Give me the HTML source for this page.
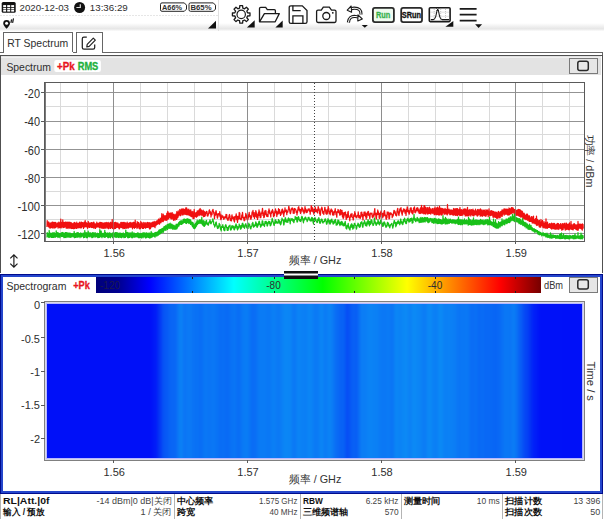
<!DOCTYPE html>
<html><head><meta charset="utf-8">
<style>
html,body{margin:0;padding:0;background:#fff;width:604px;height:519px;overflow:hidden}
svg{position:absolute;left:0;top:0;display:block}
text{font-family:"Liberation Sans",sans-serif;fill:#2e2e2e}
.b{font-weight:bold}
</style></head><body>
<svg width="604" height="519" viewBox="0 0 604 519" shape-rendering="crispEdges">
<defs>
<linearGradient id="tbg" x1="0" y1="0" x2="0" y2="1">
<stop offset="0" stop-color="#ffffff"/><stop offset="0.72" stop-color="#e6e6e6"/><stop offset="1" stop-color="#fbfbfb"/>
</linearGradient>
<linearGradient id="cbar" x1="0" y1="0" x2="1" y2="0">
<stop offset="0" stop-color="#00007a"/>
<stop offset="0.05" stop-color="#000090"/>
<stop offset="0.12" stop-color="#0000ff"/>
<stop offset="0.31" stop-color="#00ffff"/>
<stop offset="0.51" stop-color="#00ff00"/>
<stop offset="0.70" stop-color="#ffff00"/>
<stop offset="0.91" stop-color="#ff0000"/>
<stop offset="1" stop-color="#780000"/>
</linearGradient>
</defs>

<!-- ===== top status / toolbar ===== -->
<rect x="0" y="23" width="604" height="8" fill="url(#tbg)" shape-rendering="geometricPrecision"/>
<line x1="0" y1="15.5" x2="218" y2="15.5" stroke="#e6e6e6" stroke-dasharray="2 1"/>
<line x1="218.5" y1="0" x2="218.5" y2="31" stroke="#e0e0e0"/>

<!-- calendar -->
<g shape-rendering="geometricPrecision">
<rect x="1.7" y="2" width="14" height="10.7" rx="1.5" fill="#111"/>
<g fill="#fff">
<rect x="3.2" y="5.1" width="2.9" height="2"/><rect x="7.2" y="5.1" width="3" height="2"/><rect x="11.2" y="5.1" width="2.9" height="2"/>
<rect x="3.2" y="7.9" width="2.9" height="1.4"/><rect x="7.2" y="7.9" width="3" height="1.4"/><rect x="11.2" y="7.9" width="2.9" height="1.4"/>
<rect x="3.2" y="9.8" width="2.9" height="1.8"/><rect x="7.2" y="9.8" width="3" height="1.8"/><rect x="11.2" y="9.8" width="2.9" height="1.8"/>
</g>
</g>
<text x="19.5" y="11" font-size="9.5" textLength="49.5" lengthAdjust="spacingAndGlyphs">2020-12-03</text>
<!-- clock -->
<g shape-rendering="geometricPrecision">
<circle cx="79.6" cy="7.5" r="5.5" fill="#111"/>
<path d="M80.3 4.3V7.5H76.4" stroke="#ddd" stroke-width="1.2" fill="none"/>
</g>
<text x="89.8" y="11" font-size="9.5" textLength="38" lengthAdjust="spacingAndGlyphs">13:36:29</text>
<!-- batteries -->
<g shape-rendering="geometricPrecision" fill="none" stroke="#222" stroke-width="1">
<path d="M162 2.9H184.3L186.5 5.2V9.1L184.3 11.3H162Q160.5 11.3 160.5 9.8V4.4Q160.5 2.9 162 2.9Z"/>
<path d="M190.5 2.9H213.3L215.5 5.2V9.1L213.3 11.3H190.5Q189 11.3 189 9.8V4.4Q189 2.9 190.5 2.9Z"/>
</g>
<text x="162" y="10" font-size="7.5" class="b" textLength="20" lengthAdjust="spacingAndGlyphs">A66%</text>
<text x="190.5" y="10" font-size="7.5" class="b" textLength="21" lengthAdjust="spacingAndGlyphs">B65%</text>
<!-- location pin -->
<g shape-rendering="geometricPrecision">
<path d="M6.6 28.8C5 26.6 3.2 25.3 3.2 23.4A3.4 3.4 0 0 1 10 23.4C10 25.3 8.2 26.6 6.6 28.8Z" fill="#111"/>
<circle cx="6.6" cy="23.3" r="1.5" fill="#fff"/>
<path d="M11 22.4L11.5 20M12.7 22.4L13.4 18.8" stroke="#222" stroke-width="1.3" stroke-linecap="round" fill="none"/>
</g>
<path d="M208 28.5H216V20.8Z" fill="#111" shape-rendering="geometricPrecision"/>

<!-- toolbar icons -->
<g shape-rendering="geometricPrecision" fill="none" stroke="#1a1a1a" stroke-width="1.3">
<!-- gear -->
<path id="gear" d="M239.00 8.28 L239.58 8.10 L239.81 5.61 L242.59 5.61 L242.82 8.10 L243.97 8.52 L244.51 8.81 L246.43 7.20 L248.40 9.17 L246.79 11.09 L247.32 12.20 L247.50 12.78 L249.99 13.01 L249.99 15.79 L247.50 16.02 L247.08 17.17 L246.79 17.71 L248.40 19.63 L246.43 21.60 L244.51 19.99 L243.40 20.52 L242.82 20.70 L242.59 23.19 L239.81 23.19 L239.58 20.70 L238.43 20.28 L237.89 19.99 L235.97 21.60 L234.00 19.63 L235.61 17.71 L235.08 16.60 L234.90 16.02 L232.41 15.79 L232.41 13.01 L234.90 12.78 L235.32 11.63 L235.61 11.09 L234.00 9.17 L235.97 7.20 L237.89 8.81Z" stroke-linejoin="round"/>
<circle cx="241.2" cy="14.4" r="4.2" stroke-width="1.2"/>
<!-- folder -->
<path d="M259.5 21.8V8.6Q259.5 7.4 260.7 7.4H265.7L267.3 9.6H274.3Q275.4 9.6 275.4 10.7V13.4"/>
<path d="M259.5 21.8L264.4 13.6H279.3L275.2 21.8Z" stroke-linejoin="round"/>
<!-- save -->
<path d="M290.9 5.8H302.3L307 10.6V21.7Q307 23.4 305.3 23.4H290.9Q289.2 23.4 289.2 21.7V7.5Q289.2 5.8 290.9 5.8Z"/>
<path d="M292.9 5.8V10.7H300.7M292.9 23.4V15.8H302.9V23.4"/>
<!-- camera -->
<path d="M318 10.1H321.3L323.3 7.1H329.3L331.5 10.1H334.6Q336 10.1 336 11.5V21.1Q336 22.5 334.6 22.5H318Q316.6 22.5 316.6 21.1V11.5Q316.6 10.1 318 10.1Z"/>
<circle cx="326.3" cy="16" r="3.5"/>
<!-- arrows -->
<g stroke-linecap="butt">
<path d="M361 14.5Q361.5 8 354 8.2L350.5 8.8" stroke="#1a1a1a" stroke-width="3.2"/>
<path d="M361 14.5Q361.5 8 354 8.2L350.5 8.8" stroke="#fff" stroke-width="1.1"/>
<path d="M351.2 6L347.2 10.2L351.6 12.3Z" fill="#fff" stroke-width="1.1" stroke-linejoin="round"/>
<path d="M348.4 22.5Q349 15.8 355.5 16.5L358.5 17" stroke="#1a1a1a" stroke-width="3.2"/>
<path d="M348.4 22.5Q349 15.8 355.5 16.5L358.5 17" stroke="#fff" stroke-width="1.1"/>
<path d="M358 14.8L362.3 19L357.8 21Z" fill="#fff" stroke-width="1.1" stroke-linejoin="round"/>
</g>
<!-- chart icon -->
<rect x="429.3" y="7.8" width="20.8" height="13.8" rx="1" stroke-width="1.6"/>
<path d="M434.2 9V21M440.7 9V21M445.5 9V21M430.5 12.2H449M430.5 16.3H449" stroke="#b8b8b8" stroke-width="0.8" stroke-dasharray="1 1"/>
<path d="M430.8 19.6H433.2Q435.3 19.4 436.2 14.5Q437 10 437.7 10Q438.4 10 439.2 14.5Q440.1 19.4 442.3 19.6H449" stroke-width="1.1"/>
<path d="M436.4 8.4L439 11M439 8.4L436.4 11" stroke-width="0.9"/>
<!-- menu -->
<path d="M459.7 8.8H476.6M459.7 14.7H476.6M459.7 20.7H476.6" stroke-width="1.7"/>
</g>
<g fill="#111" shape-rendering="geometricPrecision">
<circle cx="332.8" cy="12.8" r="0.9"/>
<path d="M246.9 27.5H254.7V20.3Z"/>
<path d="M275.4 27.5H282.7V20.6Z"/>
<path d="M361.7 24.9H367.9L364.8 27.8Z"/>
<path d="M445.4 26.8H453.3V20.9Z"/>
<path d="M475.1 24.3H482.1L478.6 28Z"/>
</g>
<!-- run buttons -->
<g shape-rendering="geometricPrecision">
<rect x="372.9" y="7.9" width="21" height="14.2" rx="2" fill="#effaef" stroke="#2a2a2a" stroke-width="1.8"/>
<rect x="401.2" y="7.9" width="20.8" height="14.2" rx="2" fill="#fff" stroke="#2a2a2a" stroke-width="1.8"/>
</g>
<text x="376" y="17.8" font-size="9.3" class="b" style="fill:#34b04a;stroke:#34b04a;stroke-width:0.3" textLength="14.3" lengthAdjust="spacingAndGlyphs">Run</text>
<text x="401.8" y="17.8" font-size="9.3" class="b" style="fill:#111;stroke:#111;stroke-width:0.35" textLength="19.3" lengthAdjust="spacingAndGlyphs">SRun</text>

<!-- ===== tabs ===== -->
<path d="M0 52.5H3.5V32.5H72.5V52" fill="none" stroke="#666"/>
<path d="M72.5 52.5H76.5V32.5H102.5V52.5H602.5V56" fill="none" stroke="#666"/>
<text x="7.2" y="47" font-size="11.5" textLength="61" lengthAdjust="spacingAndGlyphs">RT Spectrum</text>
<g shape-rendering="geometricPrecision" fill="none" stroke="#222" stroke-width="1.25">
<path d="M86.8 37.1H83.9Q82.3 37.1 82.3 38.7V47.5Q82.3 49.1 83.9 49.1H93.1Q94.7 49.1 94.7 47.5V44.6"/>
<path d="M87.2 44.4L93.3 38.2L95.3 40.2L89.2 46.4L86.8 46.8Z" stroke-width="1.2" stroke-linejoin="round"/>
</g>

<!-- ===== Spectrum panel ===== -->
<path d="M0.5 273V55.5H602.5V273" fill="none" stroke="#505050"/>
<rect x="1" y="56" width="600" height="19" fill="#e3e3e3"/><rect x="1" y="57" width="600" height="1" fill="#f0f0f0"/>
<text x="6.4" y="70.8" font-size="11.5" textLength="44.5" lengthAdjust="spacingAndGlyphs">Spectrum</text>
<rect x="54.3" y="60" width="46.6" height="12" rx="2" fill="#fff" shape-rendering="geometricPrecision"/>
<text x="57" y="69.6" font-size="10" class="b" style="fill:#e8141e;stroke:#e8141e;stroke-width:0.3" textLength="17.7" lengthAdjust="spacingAndGlyphs">+Pk</text>
<text x="77.7" y="69.6" font-size="10" class="b" style="fill:#22b03c;stroke:#22b03c;stroke-width:0.3" textLength="20.6" lengthAdjust="spacingAndGlyphs">RMS</text>
<rect x="569.5" y="58.5" width="27.5" height="15" fill="#e6e6e6" stroke="#7a7a7a"/>
<rect x="577.8" y="61.2" width="10.5" height="9.2" rx="2" fill="#e8e8e8" stroke="#2a2a2a" stroke-width="1.5" shape-rendering="geometricPrecision"/>

<!-- grid -->
<g stroke="#dadada">
<line x1="60.5" y1="83" x2="60.5" y2="241"/><line x1="87.5" y1="83" x2="87.5" y2="241"/><line x1="140.5" y1="83" x2="140.5" y2="241"/><line x1="167.5" y1="83" x2="167.5" y2="241"/><line x1="194.5" y1="83" x2="194.5" y2="241"/><line x1="221.5" y1="83" x2="221.5" y2="241"/><line x1="274.5" y1="83" x2="274.5" y2="241"/><line x1="301.5" y1="83" x2="301.5" y2="241"/><line x1="328.5" y1="83" x2="328.5" y2="241"/><line x1="355.5" y1="83" x2="355.5" y2="241"/><line x1="408.5" y1="83" x2="408.5" y2="241"/><line x1="435.5" y1="83" x2="435.5" y2="241"/><line x1="462.5" y1="83" x2="462.5" y2="241"/><line x1="489.5" y1="83" x2="489.5" y2="241"/><line x1="542.5" y1="83" x2="542.5" y2="241"/><line x1="569.5" y1="83" x2="569.5" y2="241"/><line x1="45" y1="106.5" x2="584" y2="106.5"/><line x1="45" y1="134.5" x2="584" y2="134.5"/><line x1="45" y1="163.5" x2="584" y2="163.5"/><line x1="45" y1="191.5" x2="584" y2="191.5"/><line x1="45" y1="219.5" x2="584" y2="219.5"/>
</g>
<g stroke="#939393">
<line x1="113.5" y1="83" x2="113.5" y2="241"/><line x1="247.5" y1="83" x2="247.5" y2="241"/><line x1="381.5" y1="83" x2="381.5" y2="241"/><line x1="515.5" y1="83" x2="515.5" y2="241"/><line x1="45" y1="92.5" x2="584" y2="92.5"/><line x1="45" y1="121.5" x2="584" y2="121.5"/><line x1="45" y1="149.5" x2="584" y2="149.5"/><line x1="45" y1="177.5" x2="584" y2="177.5"/><line x1="45" y1="205.5" x2="584" y2="205.5"/><line x1="45" y1="233.5" x2="584" y2="233.5"/>
</g>
<rect x="44.5" y="82.5" width="540" height="159" fill="none" stroke="#5a5a5a"/>
<line x1="45.5" y1="83" x2="45.5" y2="241" stroke="#7a7a7a"/>
<g stroke="#5a5a5a"><line x1="41" y1="92.5" x2="45" y2="92.5"/><line x1="41" y1="121.5" x2="45" y2="121.5"/><line x1="41" y1="149.5" x2="45" y2="149.5"/><line x1="41" y1="177.5" x2="45" y2="177.5"/><line x1="41" y1="205.5" x2="45" y2="205.5"/><line x1="41" y1="233.5" x2="45" y2="233.5"/><line x1="113.5" y1="241" x2="113.5" y2="244"/><line x1="247.5" y1="241" x2="247.5" y2="244"/><line x1="381.5" y1="241" x2="381.5" y2="244"/><line x1="515.5" y1="241" x2="515.5" y2="244"/></g>
<g shape-rendering="geometricPrecision" fill="none" stroke-width="1.25" stroke-linejoin="round">
<path d="M47.0 226.9 L47.2 220.6 L47.5 225.0 L47.8 224.1 L48.0 224.7 L48.2 222.3 L48.5 226.7 L48.8 222.0 L49.0 227.1 L49.2 224.1 L49.5 226.9 L49.8 224.0 L50.0 228.1 L50.2 222.9 L50.5 227.1 L50.8 223.3 L51.0 227.8 L51.2 223.5 L51.5 227.3 L51.8 222.4 L52.0 226.8 L52.2 223.0 L52.5 227.9 L52.8 222.0 L53.0 227.2 L53.2 223.9 L53.5 226.3 L53.8 222.5 L54.0 228.2 L54.2 222.6 L54.5 227.6 L54.8 222.3 L55.0 227.3 L55.2 224.1 L55.5 227.7 L55.8 222.4 L56.0 227.1 L56.2 224.2 L56.5 226.6 L56.8 224.1 L57.0 226.5 L57.2 223.4 L57.5 226.4 L57.8 223.0 L58.0 228.1 L58.2 223.6 L58.5 227.1 L58.8 222.1 L59.0 226.7 L59.2 223.7 L59.5 227.6 L59.8 224.3 L60.0 227.1 L60.2 222.1 L60.5 227.4 L60.8 219.1 L61.0 228.1 L61.2 222.4 L61.5 227.2 L61.8 222.5 L62.0 226.7 L62.2 223.5 L62.5 226.6 L62.8 219.9 L63.0 227.7 L63.2 223.7 L63.5 227.1 L63.8 222.3 L64.0 227.3 L64.2 224.1 L64.5 227.1 L64.8 222.4 L65.0 226.3 L65.2 223.1 L65.5 225.4 L65.8 222.0 L66.0 227.9 L66.2 223.4 L66.5 228.1 L66.8 222.5 L67.0 226.8 L67.2 222.0 L67.5 228.1 L67.8 222.6 L68.0 227.5 L68.2 223.1 L68.5 226.9 L68.8 222.1 L69.0 228.5 L69.2 222.1 L69.5 226.8 L69.8 223.9 L70.0 227.7 L70.2 222.4 L70.5 227.8 L70.8 224.1 L71.0 228.4 L71.2 222.6 L71.5 226.7 L71.8 223.6 L72.0 228.5 L72.2 223.4 L72.5 228.0 L72.8 224.0 L73.0 228.4 L73.2 224.0 L73.5 228.6 L73.8 223.5 L74.0 222.7 L74.2 222.8 L74.5 228.5 L74.8 222.3 L75.0 226.8 L75.2 223.7 L75.5 227.7 L75.8 223.4 L76.0 228.4 L76.2 223.3 L76.5 228.4 L76.8 222.2 L77.0 227.6 L77.2 224.3 L77.5 223.6 L77.8 223.9 L78.0 228.0 L78.2 223.6 L78.5 227.6 L78.8 224.1 L79.0 226.9 L79.2 222.6 L79.5 227.6 L79.8 222.2 L80.0 227.7 L80.2 223.2 L80.5 227.4 L80.8 223.3 L81.0 228.0 L81.2 222.2 L81.5 227.6 L81.8 222.4 L82.0 226.6 L82.2 224.2 L82.5 226.5 L82.8 222.6 L83.0 226.7 L83.2 222.8 L83.5 228.4 L83.8 223.9 L84.0 227.3 L84.2 222.1 L84.5 226.7 L84.8 223.2 L85.0 226.8 L85.2 220.5 L85.5 226.0 L85.8 222.9 L86.0 226.5 L86.2 222.6 L86.5 226.6 L86.8 224.3 L87.0 227.0 L87.2 223.4 L87.5 228.3 L87.8 224.0 L88.0 227.7 L88.2 221.4 L88.5 223.6 L88.8 222.9 L89.0 226.6 L89.2 224.2 L89.5 227.4 L89.8 223.1 L90.0 227.0 L90.2 223.2 L90.5 226.6 L90.8 224.3 L91.0 227.1 L91.2 222.6 L91.5 227.5 L91.8 222.6 L92.0 226.4 L92.2 223.1 L92.5 227.5 L92.8 224.2 L93.0 227.4 L93.2 222.5 L93.5 227.6 L93.8 222.1 L94.0 228.3 L94.2 222.9 L94.5 226.7 L94.8 224.3 L95.0 227.0 L95.2 224.2 L95.5 228.4 L95.8 223.8 L96.0 227.1 L96.2 224.1 L96.5 227.0 L96.8 222.2 L97.0 227.0 L97.2 223.7 L97.5 226.4 L97.8 223.3 L98.0 226.9 L98.2 224.4 L98.5 226.6 L98.8 223.1 L99.0 227.0 L99.2 223.2 L99.5 227.9 L99.8 222.4 L100.0 227.2 L100.2 224.1 L100.5 224.6 L100.8 222.4 L101.0 228.1 L101.2 224.1 L101.5 227.6 L101.8 222.6 L102.0 227.8 L102.2 222.9 L102.5 226.4 L102.8 223.6 L103.0 228.4 L103.2 223.0 L103.5 228.0 L103.8 224.4 L104.0 228.2 L104.2 223.2 L104.5 226.6 L104.8 222.8 L105.0 228.1 L105.2 222.8 L105.5 227.6 L105.8 223.4 L106.0 228.2 L106.2 222.4 L106.5 227.0 L106.8 223.8 L107.0 225.4 L107.2 222.9 L107.5 228.0 L107.8 223.3 L108.0 227.5 L108.2 222.4 L108.5 228.7 L108.8 224.4 L109.0 228.4 L109.2 223.4 L109.5 226.9 L109.8 224.0 L110.0 226.8 L110.2 222.3 L110.5 228.4 L110.8 222.4 L111.0 227.0 L111.2 223.4 L111.5 227.6 L111.8 223.8 L112.0 227.3 L112.2 219.5 L112.5 228.4 L112.8 222.4 L113.0 228.6 L113.2 223.6 L113.5 228.8 L113.8 223.7 L114.0 226.7 L114.2 222.6 L114.5 228.6 L114.8 223.9 L115.0 226.9 L115.2 222.3 L115.5 228.4 L115.8 222.4 L116.0 227.8 L116.2 224.4 L116.5 227.5 L116.8 223.0 L117.0 226.6 L117.2 224.2 L117.5 227.3 L117.8 222.8 L118.0 227.1 L118.2 223.8 L118.5 227.4 L118.8 224.1 L119.0 228.6 L119.2 224.0 L119.5 228.8 L119.8 224.2 L120.0 226.7 L120.2 224.3 L120.5 227.1 L120.8 222.5 L121.0 227.5 L121.2 223.3 L121.5 226.2 L121.8 222.3 L122.0 227.7 L122.2 222.5 L122.5 227.1 L122.8 223.6 L123.0 228.7 L123.2 222.4 L123.5 228.2 L123.8 223.4 L124.0 226.5 L124.2 222.4 L124.5 228.5 L124.8 224.0 L125.0 226.9 L125.2 223.0 L125.5 228.2 L125.8 222.8 L126.0 224.7 L126.2 224.0 L126.5 228.0 L126.8 224.3 L127.0 228.0 L127.2 222.2 L127.5 227.9 L127.8 224.0 L128.0 226.6 L128.2 223.5 L128.5 228.0 L128.8 223.5 L129.0 227.1 L129.2 222.9 L129.5 226.6 L129.8 223.0 L130.0 227.1 L130.2 222.4 L130.5 226.6 L130.8 223.6 L131.0 227.0 L131.2 222.9 L131.5 227.0 L131.8 223.9 L132.0 227.1 L132.2 222.8 L132.5 228.8 L132.8 224.1 L133.0 227.5 L133.2 222.4 L133.5 227.5 L133.8 222.3 L134.0 225.1 L134.2 222.5 L134.5 228.3 L134.8 222.4 L135.0 227.0 L135.2 220.2 L135.5 227.4 L135.8 223.8 L136.0 226.6 L136.2 223.8 L136.5 226.9 L136.8 224.1 L137.0 228.5 L137.2 221.7 L137.5 227.4 L137.8 224.2 L138.0 227.0 L138.2 222.7 L138.5 226.4 L138.8 222.5 L139.0 228.3 L139.2 223.8 L139.5 228.8 L139.8 224.0 L140.0 227.3 L140.2 224.6 L140.5 228.7 L140.8 221.5 L141.0 227.7 L141.2 222.4 L141.5 227.2 L141.8 223.5 L142.0 227.0 L142.2 222.9 L142.5 228.4 L142.8 223.9 L143.0 227.5 L143.2 224.5 L143.5 228.4 L143.8 222.3 L144.0 227.4 L144.2 222.6 L144.5 226.9 L144.8 223.5 L145.0 227.7 L145.2 223.7 L145.5 228.2 L145.8 222.7 L146.0 226.9 L146.2 224.0 L146.5 227.5 L146.8 224.2 L147.0 227.2 L147.2 222.6 L147.5 227.4 L147.8 222.4 L148.0 227.2 L148.2 223.2 L148.5 226.9 L148.8 222.8 L149.0 227.6 L149.2 224.4 L149.5 228.9 L149.8 222.6 L150.0 228.7 L150.2 224.0 L150.5 228.7 L150.8 223.1 L151.0 226.9 L151.2 224.0 L151.5 226.9 L151.8 222.7 L152.0 226.2 L152.2 222.5 L152.5 226.7 L152.8 222.1 L153.0 226.0 L153.2 222.9 L153.5 226.5 L153.8 222.1 L154.0 226.2 L154.2 221.3 L154.5 226.7 L154.8 222.4 L155.0 227.6 L155.2 222.7 L155.5 221.9 L155.8 221.9 L156.0 225.6 L156.2 221.5 L156.5 224.5 L156.8 220.8 L157.0 224.3 L157.2 221.1 L157.5 224.2 L157.8 220.5 L158.0 223.8 L158.2 219.6 L158.5 223.7 L158.8 219.0 L159.0 220.4 L159.2 219.9 L159.5 224.1 L159.8 220.2 L160.0 222.9 L160.2 218.0 L160.5 222.5 L160.8 218.7 L161.0 222.6 L161.2 218.7 L161.5 221.3 L161.8 213.7 L162.0 221.2 L162.2 217.1 L162.5 221.3 L162.8 216.7 L163.0 221.7 L163.2 214.1 L163.5 220.9 L163.8 215.4 L164.0 220.4 L164.2 215.7 L164.5 219.2 L164.8 216.3 L165.0 217.2 L165.2 216.0 L165.5 220.2 L165.8 215.8 L166.0 219.0 L166.2 215.4 L166.5 220.3 L166.8 213.5 L167.0 220.0 L167.2 212.9 L167.5 217.7 L167.8 211.3 L168.0 219.0 L168.2 212.6 L168.5 218.9 L168.8 213.3 L169.0 217.2 L169.2 213.1 L169.5 216.5 L169.8 213.7 L170.0 217.9 L170.2 213.7 L170.5 216.7 L170.8 212.8 L171.0 218.8 L171.2 213.1 L171.5 217.1 L171.8 213.2 L172.0 219.1 L172.2 212.6 L172.5 218.2 L172.8 214.2 L173.0 216.2 L173.2 214.9 L173.5 220.3 L173.8 214.1 L174.0 217.4 L174.2 214.4 L174.5 219.5 L174.8 215.9 L175.0 220.1 L175.2 215.2 L175.5 218.9 L175.8 214.1 L176.0 218.1 L176.2 213.9 L176.5 219.4 L176.8 211.7 L177.0 218.8 L177.2 213.2 L177.5 216.2 L177.8 212.3 L178.0 217.3 L178.2 210.9 L178.5 215.8 L178.8 212.7 L179.0 215.7 L179.2 212.2 L179.5 214.3 L179.8 209.5 L180.0 214.3 L180.2 210.3 L180.5 215.7 L180.8 210.6 L181.0 213.6 L181.2 209.2 L181.5 213.3 L181.8 209.1 L182.0 215.0 L182.2 210.3 L182.5 212.2 L182.8 208.8 L183.0 214.9 L183.2 209.8 L183.5 213.7 L183.8 209.0 L184.0 214.0 L184.2 209.6 L184.5 212.3 L184.8 209.4 L185.0 214.5 L185.2 209.2 L185.5 213.0 L185.8 207.8 L186.0 214.1 L186.2 207.8 L186.5 214.6 L186.8 208.2 L187.0 214.4 L187.2 209.7 L187.5 210.6 L187.8 209.8 L188.0 215.1 L188.2 210.2 L188.5 214.7 L188.8 209.1 L189.0 213.2 L189.2 210.0 L189.5 215.2 L189.8 210.9 L190.0 215.6 L190.2 211.1 L190.5 210.7 L190.8 209.8 L191.0 216.4 L191.2 211.3 L191.5 216.7 L191.8 212.1 L192.0 215.3 L192.2 212.7 L192.5 216.7 L192.8 211.4 L193.0 218.4 L193.2 214.3 L193.5 217.9 L193.8 214.0 L194.0 218.6 L194.2 209.5 L194.5 216.5 L194.8 212.6 L195.0 216.5 L195.2 212.9 L195.5 216.6 L195.8 212.9 L196.0 216.4 L196.2 212.7 L196.5 217.1 L196.8 212.7 L197.0 215.2 L197.2 210.9 L197.5 216.2 L197.8 211.2 L198.0 212.9 L198.2 211.8 L198.5 214.5 L198.8 210.2 L199.0 215.7 L199.2 209.9 L199.5 215.0 L199.8 209.1 L200.0 213.5 L200.2 208.5 L200.5 214.8 L200.8 209.8 L201.0 214.6 L201.2 209.9 L201.5 214.0 L201.8 210.6 L202.0 215.7 L202.2 211.2 L202.5 214.7 L202.8 211.4 L203.0 214.5 L203.2 210.2 L203.5 216.7 L203.8 211.3 L204.0 216.5 L204.2 211.4 L204.5 216.4 L204.8 212.2 L205.0 215.1 L205.2 215.8 L205.5 213.5 L205.8 212.5 L206.0 212.3 L206.2 212.2 L206.5 211.3 L206.8 213.6 L207.0 211.7 L207.2 215.7 L207.5 215.5 L207.8 216.2 L208.0 215.1 L208.2 215.1 L208.5 213.2 L208.8 213.8 L209.0 210.7 L209.2 210.8 L209.5 209.8 L209.8 212.8 L210.0 212.1 L210.2 211.6 L210.5 214.1 L210.8 212.2 L211.0 217.0 L211.2 213.3 L211.5 214.8 L211.8 213.9 L212.0 214.8 L212.2 212.0 L212.5 210.2 L212.8 210.5 L213.0 209.3 L213.2 210.7 L213.5 211.4 L213.8 213.4 L214.0 213.9 L214.2 214.1 L214.5 218.6 L214.8 214.2 L215.0 214.4 L215.2 212.4 L215.5 215.1 L215.8 212.7 L216.0 210.7 L216.2 211.3 L216.5 214.5 L216.8 213.6 L217.0 214.9 L217.2 217.2 L217.5 218.2 L217.8 216.6 L218.0 216.5 L218.2 213.7 L218.5 214.4 L218.8 213.8 L219.0 213.7 L219.2 214.2 L219.5 215.2 L219.8 211.6 L220.0 216.8 L220.2 213.8 L220.5 217.1 L220.8 219.6 L221.0 217.0 L221.2 216.4 L221.5 218.9 L221.8 215.0 L222.0 217.6 L222.2 217.4 L222.5 216.1 L222.8 216.0 L223.0 216.6 L223.2 216.7 L223.5 217.8 L223.8 219.4 L224.0 217.2 L224.2 217.4 L224.5 217.3 L224.8 217.0 L225.0 218.1 L225.2 217.1 L225.5 216.4 L225.8 216.6 L226.0 214.4 L226.2 217.8 L226.5 217.0 L226.8 214.7 L227.0 218.8 L227.2 217.9 L227.5 219.6 L227.8 220.3 L228.0 219.9 L228.2 220.3 L228.5 217.6 L228.8 218.3 L229.0 215.8 L229.2 215.7 L229.5 214.5 L229.8 215.9 L230.0 216.0 L230.2 220.3 L230.5 220.2 L230.8 218.6 L231.0 220.8 L231.2 219.3 L231.5 220.8 L231.8 215.8 L232.0 214.8 L232.2 218.6 L232.5 216.5 L232.8 217.7 L233.0 217.0 L233.2 218.2 L233.5 218.9 L233.8 219.6 L234.0 220.9 L234.2 216.9 L234.5 222.0 L234.8 218.5 L235.0 219.8 L235.2 216.4 L235.5 216.4 L235.8 215.6 L236.0 216.3 L236.2 213.9 L236.5 218.5 L236.8 219.8 L237.0 216.0 L237.2 219.7 L237.5 222.4 L237.8 219.3 L238.0 219.7 L238.2 216.4 L238.5 218.3 L238.8 218.9 L239.0 217.6 L239.2 212.5 L239.5 214.4 L239.8 213.0 L240.0 218.2 L240.2 219.1 L240.5 219.3 L240.8 219.2 L241.0 218.3 L241.2 219.8 L241.5 218.7 L241.8 215.0 L242.0 217.5 L242.2 217.3 L242.5 212.4 L242.8 215.5 L243.0 216.8 L243.2 218.1 L243.5 218.1 L243.8 217.7 L244.0 220.3 L244.2 220.8 L244.5 217.5 L244.8 220.1 L245.0 218.5 L245.2 216.6 L245.5 216.9 L245.8 213.4 L246.0 216.5 L246.2 216.2 L246.5 218.0 L246.8 215.0 L247.0 217.1 L247.2 219.8 L247.5 216.7 L247.8 219.7 L248.0 217.7 L248.2 218.3 L248.5 216.6 L248.8 214.1 L249.0 214.3 L249.2 212.3 L249.5 216.7 L249.8 215.8 L250.0 215.9 L250.2 215.5 L250.5 219.0 L250.8 216.2 L251.0 219.1 L251.2 217.3 L251.5 218.0 L251.8 215.1 L252.0 212.9 L252.2 212.0 L252.5 212.4 L252.8 213.3 L253.0 210.4 L253.2 214.7 L253.5 216.7 L253.8 215.1 L254.0 216.8 L254.2 212.6 L254.5 218.4 L254.8 216.0 L255.0 216.3 L255.2 216.3 L255.5 214.8 L255.8 210.7 L256.0 211.6 L256.2 211.7 L256.5 216.6 L256.8 217.7 L257.0 214.0 L257.2 216.4 L257.5 219.4 L257.8 216.6 L258.0 217.7 L258.2 214.1 L258.5 212.1 L258.8 215.5 L259.0 209.9 L259.2 211.9 L259.5 215.4 L259.8 211.9 L260.0 215.9 L260.2 217.7 L260.5 217.7 L260.8 217.7 L261.0 216.5 L261.2 213.2 L261.5 213.2 L261.8 213.5 L262.0 211.5 L262.2 211.1 L262.5 208.3 L262.8 211.4 L263.0 215.4 L263.2 212.5 L263.5 213.1 L263.8 217.6 L264.0 216.4 L264.2 217.4 L264.5 215.6 L264.8 211.0 L265.0 213.6 L265.2 214.4 L265.5 211.3 L265.8 210.4 L266.0 211.5 L266.2 213.1 L266.5 215.9 L266.8 214.9 L267.0 216.3 L267.2 216.1 L267.5 214.5 L267.8 214.2 L268.0 216.6 L268.2 211.3 L268.5 212.8 L268.8 210.7 L269.0 208.8 L269.2 211.2 L269.5 210.3 L269.8 213.7 L270.0 214.0 L270.2 213.7 L270.5 214.0 L270.8 217.0 L271.0 213.3 L271.2 212.0 L271.5 213.3 L271.8 211.0 L272.0 212.7 L272.2 211.3 L272.5 209.5 L272.8 212.0 L273.0 210.9 L273.2 213.1 L273.5 216.6 L273.8 213.1 L274.0 215.5 L274.2 213.7 L274.5 215.7 L274.8 211.5 L275.0 211.7 L275.2 211.3 L275.5 208.9 L275.8 212.8 L276.0 211.0 L276.2 212.1 L276.5 211.2 L276.8 216.5 L277.0 215.0 L277.2 213.2 L277.5 213.1 L277.8 211.7 L278.0 214.2 L278.2 213.0 L278.5 208.7 L278.8 210.7 L279.0 211.5 L279.2 213.1 L279.5 209.6 L279.8 212.6 L280.0 212.3 L280.2 213.7 L280.5 215.4 L280.8 212.3 L281.0 214.5 L281.2 214.0 L281.5 211.0 L281.8 212.4 L282.0 209.4 L282.2 211.1 L282.5 209.1 L282.8 210.8 L283.0 213.4 L283.2 214.2 L283.5 211.1 L283.8 216.4 L284.0 212.3 L284.2 213.4 L284.5 212.0 L284.8 210.7 L285.0 207.8 L285.2 211.8 L285.5 211.1 L285.8 211.2 L286.0 210.7 L286.2 209.9 L286.5 210.7 L286.8 214.7 L287.0 212.0 L287.2 212.7 L287.5 211.2 L287.8 212.1 L288.0 211.0 L288.2 209.8 L288.5 208.7 L288.8 206.3 L289.0 206.9 L289.2 209.1 L289.5 209.0 L289.8 211.2 L290.0 212.3 L290.2 213.3 L290.5 213.7 L290.8 212.1 L291.0 210.9 L291.2 208.9 L291.5 209.5 L291.8 208.2 L292.0 209.7 L292.2 208.6 L292.5 208.0 L292.8 208.8 L293.0 208.9 L293.2 213.3 L293.5 209.9 L293.8 212.3 L294.0 209.8 L294.2 213.3 L294.5 208.5 L294.8 208.7 L295.0 209.2 L295.2 209.4 L295.5 209.2 L295.8 210.0 L296.0 210.9 L296.2 212.4 L296.5 211.1 L296.8 212.2 L297.0 214.9 L297.2 211.4 L297.5 212.8 L297.8 209.6 L298.0 209.2 L298.2 207.5 L298.5 208.0 L298.8 206.7 L299.0 210.1 L299.2 208.9 L299.5 208.9 L299.8 211.1 L300.0 209.4 L300.2 211.4 L300.5 213.5 L300.8 209.5 L301.0 212.2 L301.2 209.8 L301.5 210.8 L301.8 208.1 L302.0 207.6 L302.2 209.2 L302.5 208.4 L302.8 209.1 L303.0 211.6 L303.2 209.5 L303.5 211.8 L303.8 212.5 L304.0 213.7 L304.2 210.3 L304.5 212.3 L304.8 209.2 L305.0 206.6 L305.2 209.9 L305.5 208.4 L305.8 211.1 L306.0 211.5 L306.2 212.7 L306.5 209.8 L306.8 212.4 L307.0 210.9 L307.2 212.4 L307.5 210.2 L307.8 209.9 L308.0 210.9 L308.2 208.9 L308.5 209.6 L308.8 209.2 L309.0 209.2 L309.2 208.8 L309.5 210.9 L309.8 211.9 L310.0 210.5 L310.2 214.2 L310.5 210.1 L310.8 211.4 L311.0 211.1 L311.2 205.7 L311.5 208.1 L311.8 207.5 L312.0 207.2 L312.2 211.2 L312.5 209.2 L312.8 208.1 L313.0 212.0 L313.2 212.1 L313.5 209.7 L313.8 214.2 L314.0 213.7 L314.2 209.9 L314.5 212.4 L314.8 211.6 L315.0 208.0 L315.2 207.0 L315.5 211.1 L315.8 211.5 L316.0 209.2 L316.2 210.1 L316.5 211.4 L316.8 211.3 L317.0 212.2 L317.2 209.8 L317.5 212.9 L317.8 209.2 L318.0 208.6 L318.2 206.6 L318.5 207.7 L318.8 210.3 L319.0 208.9 L319.2 209.0 L319.5 213.4 L319.8 210.8 L320.0 214.4 L320.2 215.4 L320.5 214.6 L320.8 210.2 L321.0 209.0 L321.2 208.8 L321.5 209.7 L321.8 207.2 L322.0 207.9 L322.2 208.2 L322.5 211.1 L322.8 213.1 L323.0 213.3 L323.2 212.4 L323.5 211.4 L323.8 214.5 L324.0 212.8 L324.2 211.5 L324.5 210.4 L324.8 207.4 L325.0 207.5 L325.2 210.4 L325.5 209.7 L325.8 212.3 L326.0 213.6 L326.2 209.8 L326.5 214.2 L326.8 213.4 L327.0 214.1 L327.2 214.0 L327.5 212.2 L327.8 208.8 L328.0 211.2 L328.2 206.5 L328.5 207.9 L328.8 208.8 L329.0 211.7 L329.2 213.5 L329.5 213.7 L329.8 213.1 L330.0 211.4 L330.2 214.8 L330.5 210.4 L330.8 211.9 L331.0 209.3 L331.2 209.0 L331.5 211.0 L331.8 210.6 L332.0 211.7 L332.2 210.2 L332.5 214.4 L332.8 215.1 L333.0 215.0 L333.2 215.2 L333.5 211.9 L333.8 213.1 L334.0 214.8 L334.2 211.6 L334.5 212.7 L334.8 210.7 L335.0 210.7 L335.2 208.7 L335.5 211.2 L335.8 211.5 L336.0 214.4 L336.2 212.8 L336.5 215.1 L336.8 217.1 L337.0 213.1 L337.2 211.6 L337.5 211.8 L337.8 212.1 L338.0 209.5 L338.2 210.9 L338.5 212.6 L338.8 210.1 L339.0 212.2 L339.2 211.5 L339.5 213.0 L339.8 215.1 L340.0 214.7 L340.2 214.2 L340.5 209.6 L340.8 214.7 L341.0 213.9 L341.2 212.4 L341.5 211.3 L341.8 210.4 L342.0 210.3 L342.2 214.4 L342.5 216.8 L342.8 214.2 L343.0 212.6 L343.2 218.6 L343.5 214.6 L343.8 217.2 L344.0 213.1 L344.2 215.7 L344.5 212.5 L344.8 214.3 L345.0 212.3 L345.2 213.1 L345.5 212.0 L345.8 216.2 L346.0 217.5 L346.2 219.5 L346.5 218.2 L346.8 216.5 L347.0 214.7 L347.2 214.4 L347.5 217.7 L347.8 212.4 L348.0 212.4 L348.2 211.4 L348.5 216.6 L348.8 215.3 L349.0 217.3 L349.2 217.0 L349.5 218.0 L349.8 220.8 L350.0 217.1 L350.2 217.7 L350.5 216.4 L350.8 214.2 L351.0 215.3 L351.2 216.7 L351.5 216.6 L351.8 215.5 L352.0 213.5 L352.2 217.0 L352.5 217.6 L352.8 217.9 L353.0 217.7 L353.2 220.0 L353.5 218.6 L353.8 214.8 L354.0 215.4 L354.2 214.8 L354.5 214.8 L354.8 211.7 L355.0 216.4 L355.2 213.2 L355.5 214.7 L355.8 216.8 L356.0 217.4 L356.2 216.8 L356.5 216.3 L356.8 217.9 L357.0 216.2 L357.2 215.5 L357.5 215.3 L357.8 215.5 L358.0 215.9 L358.2 211.8 L358.5 214.1 L358.8 217.7 L359.0 217.5 L359.2 217.7 L359.5 215.6 L359.8 216.6 L360.0 218.3 L360.2 218.4 L360.5 217.5 L360.8 216.9 L361.0 212.3 L361.2 212.4 L361.5 214.2 L361.8 212.2 L362.0 216.0 L362.2 215.3 L362.5 214.3 L362.8 218.6 L363.0 220.0 L363.2 215.8 L363.5 216.0 L363.8 215.8 L364.0 212.2 L364.2 215.3 L364.5 213.3 L364.8 213.7 L365.0 211.8 L365.2 214.5 L365.5 216.6 L365.8 213.4 L366.0 214.8 L366.2 219.2 L366.5 214.5 L366.8 217.6 L367.0 214.7 L367.2 212.7 L367.5 213.1 L367.8 213.3 L368.0 211.4 L368.2 215.0 L368.5 211.5 L368.8 213.9 L369.0 215.7 L369.2 213.9 L369.5 214.9 L369.8 218.7 L370.0 216.7 L370.2 213.9 L370.5 213.1 L370.8 213.6 L371.0 213.8 L371.2 213.3 L371.5 214.1 L371.8 214.2 L372.0 213.2 L372.2 216.9 L372.5 216.7 L372.8 217.9 L373.0 216.8 L373.2 215.2 L373.5 214.7 L373.8 213.6 L374.0 216.1 L374.2 212.2 L374.5 210.7 L374.8 208.6 L375.0 213.1 L375.2 214.5 L375.5 213.2 L375.8 214.7 L376.0 217.6 L376.2 219.1 L376.5 218.3 L376.8 213.2 L377.0 215.0 L377.2 213.1 L377.5 212.6 L377.8 210.0 L378.0 214.4 L378.2 211.5 L378.5 212.8 L378.8 213.3 L379.0 214.0 L379.2 218.1 L379.5 215.6 L379.8 218.6 L380.0 213.4 L380.2 216.7 L380.5 212.2 L380.8 213.5 L381.0 213.2 L381.2 210.9 L381.5 214.5 L381.8 213.6 L382.0 213.0 L382.2 213.4 L382.5 215.7 L382.8 217.8 L383.0 214.5 L383.2 216.4 L383.5 213.1 L383.8 215.8 L384.0 211.8 L384.2 211.3 L384.5 210.6 L384.8 213.1 L385.0 214.8 L385.2 215.9 L385.5 215.1 L385.8 215.6 L386.0 218.9 L386.2 216.5 L386.5 219.1 L386.8 214.9 L387.0 217.4 L387.2 212.0 L387.5 214.5 L387.8 212.3 L388.0 212.4 L388.2 212.1 L388.5 213.0 L388.8 216.2 L389.0 218.8 L389.2 215.5 L389.5 218.6 L389.8 212.9 L390.0 214.4 L390.2 214.8 L390.5 213.1 L390.8 212.8 L391.0 214.2 L391.2 213.7 L391.5 214.0 L391.8 214.5 L392.0 214.2 L392.2 217.6 L392.5 214.7 L392.8 215.3 L393.0 214.3 L393.2 216.0 L393.5 212.9 L393.8 211.6 L394.0 210.4 L394.2 213.1 L394.5 212.6 L394.8 211.0 L395.0 212.7 L395.2 211.8 L395.5 214.7 L395.8 215.3 L396.0 214.2 L396.2 214.1 L396.5 215.8 L396.8 215.0 L397.0 211.0 L397.2 211.7 L397.5 208.8 L397.8 208.4 L398.0 212.0 L398.2 211.0 L398.5 213.7 L398.8 215.2 L399.0 215.5 L399.2 212.4 L399.5 212.9 L399.8 209.0 L400.0 211.6 L400.2 209.8 L400.5 209.0 L400.8 208.4 L401.0 207.7 L401.2 210.2 L401.5 210.2 L401.8 213.8 L402.0 211.0 L402.2 215.1 L402.5 212.7 L402.8 212.5 L403.0 210.5 L403.2 211.5 L403.5 208.8 L403.8 211.0 L404.0 209.7 L404.2 211.0 L404.5 210.4 L404.8 209.1 L405.0 213.1 L405.2 211.0 L405.5 210.5 L405.8 210.6 L406.0 215.4 L406.2 213.0 L406.5 210.3 L406.8 208.9 L407.0 211.4 L407.2 206.9 L407.5 207.5 L407.8 209.1 L408.0 210.2 L408.2 212.2 L408.5 211.6 L408.8 210.6 L409.0 213.9 L409.2 214.2 L409.5 212.5 L409.8 212.5 L410.0 211.4 L410.2 208.6 L410.5 208.0 L410.8 208.2 L411.0 208.6 L411.2 207.9 L411.5 212.2 L411.8 211.0 L412.0 213.2 L412.2 210.7 L412.5 212.9 L412.8 214.0 L413.0 212.5 L413.2 212.4 L413.5 208.0 L413.8 207.9 L414.0 207.6 L414.2 208.3 L414.5 206.9 L414.8 212.2 L415.0 210.2 L415.2 212.8 L415.5 210.3 L415.8 212.2 L416.0 211.1 L416.2 210.8 L416.5 208.4 L416.8 210.0 L417.0 210.4 L417.2 207.6 L417.5 209.8 L417.8 209.5 L418.0 208.2 L418.2 211.9 L418.5 209.5 L418.8 211.4 L419.0 211.8 L419.2 213.4 L419.5 211.2 L419.8 211.5 L420.0 209.0 L420.2 213.5 L420.5 207.9 L420.8 211.9 L421.0 208.6 L421.2 213.0 L421.5 205.3 L421.8 212.9 L422.0 207.5 L422.2 213.0 L422.5 208.5 L422.8 213.1 L423.0 208.0 L423.2 210.1 L423.5 208.3 L423.8 213.8 L424.0 205.9 L424.2 209.1 L424.5 205.6 L424.8 213.7 L425.0 209.6 L425.2 212.9 L425.5 207.2 L425.8 214.1 L426.0 208.9 L426.2 211.9 L426.5 209.1 L426.8 212.7 L427.0 207.6 L427.2 213.3 L427.5 209.7 L427.8 214.2 L428.0 207.7 L428.2 210.4 L428.5 208.9 L428.8 213.3 L429.0 209.0 L429.2 212.6 L429.5 207.2 L429.8 213.4 L430.0 208.5 L430.2 212.8 L430.5 209.2 L430.8 214.1 L431.0 208.8 L431.2 213.3 L431.5 209.9 L431.8 210.3 L432.0 209.9 L432.2 212.7 L432.5 208.7 L432.8 213.5 L433.0 208.4 L433.2 212.8 L433.5 209.8 L433.8 212.8 L434.0 209.9 L434.2 214.7 L434.5 208.5 L434.8 214.6 L435.0 207.0 L435.2 212.5 L435.5 209.5 L435.8 213.9 L436.0 208.9 L436.2 214.8 L436.5 208.2 L436.8 214.5 L437.0 207.8 L437.2 214.1 L437.5 207.1 L437.8 214.4 L438.0 208.7 L438.2 214.7 L438.5 208.1 L438.8 215.0 L439.0 209.7 L439.2 214.5 L439.5 206.2 L439.8 214.8 L440.0 208.6 L440.2 213.4 L440.5 208.4 L440.8 212.6 L441.0 208.1 L441.2 215.1 L441.5 210.4 L441.8 213.8 L442.0 208.6 L442.2 214.7 L442.5 210.3 L442.8 212.9 L443.0 208.5 L443.2 211.8 L443.5 210.3 L443.8 213.0 L444.0 209.6 L444.2 214.4 L444.5 210.1 L444.8 213.5 L445.0 208.3 L445.2 209.5 L445.5 210.2 L445.8 214.0 L446.0 209.3 L446.2 214.0 L446.5 209.6 L446.8 213.7 L447.0 210.2 L447.2 214.9 L447.5 204.5 L447.8 213.9 L448.0 209.1 L448.2 213.3 L448.5 210.1 L448.8 212.8 L449.0 209.2 L449.2 212.6 L449.5 209.9 L449.8 214.7 L450.0 210.4 L450.2 214.2 L450.5 210.4 L450.8 214.5 L451.0 209.7 L451.2 213.9 L451.5 210.6 L451.8 213.8 L452.0 210.4 L452.2 214.7 L452.5 210.3 L452.8 213.2 L453.0 210.1 L453.2 215.3 L453.5 208.7 L453.8 214.2 L454.0 208.5 L454.2 214.5 L454.5 209.2 L454.8 212.1 L455.0 209.9 L455.2 215.4 L455.5 209.0 L455.8 215.1 L456.0 208.6 L456.2 215.2 L456.5 209.4 L456.8 215.2 L457.0 208.7 L457.2 215.5 L457.5 208.6 L457.8 215.6 L458.0 210.4 L458.2 213.8 L458.5 209.9 L458.8 214.4 L459.0 209.3 L459.2 214.2 L459.5 209.1 L459.8 215.6 L460.0 207.5 L460.2 215.4 L460.5 209.6 L460.8 213.4 L461.0 211.1 L461.2 215.4 L461.5 209.7 L461.8 214.2 L462.0 210.3 L462.2 215.0 L462.5 211.0 L462.8 215.2 L463.0 209.6 L463.2 213.7 L463.5 211.2 L463.8 213.9 L464.0 208.9 L464.2 214.1 L464.5 209.8 L464.8 214.5 L465.0 209.0 L465.2 216.0 L465.5 209.3 L465.8 214.2 L466.0 209.0 L466.2 215.6 L466.5 210.6 L466.8 215.0 L467.0 210.2 L467.2 216.0 L467.5 207.3 L467.8 214.8 L468.0 210.6 L468.2 215.3 L468.5 210.2 L468.8 216.0 L469.0 210.7 L469.2 213.9 L469.5 209.9 L469.8 214.9 L470.0 209.4 L470.2 214.4 L470.5 211.3 L470.8 216.0 L471.0 210.1 L471.2 213.9 L471.5 209.7 L471.8 214.5 L472.0 210.9 L472.2 214.8 L472.5 210.0 L472.8 215.5 L473.0 209.2 L473.2 215.5 L473.5 211.2 L473.8 215.9 L474.0 210.7 L474.2 215.1 L474.5 211.2 L474.8 214.2 L475.0 211.5 L475.2 214.7 L475.5 209.2 L475.8 214.6 L476.0 211.1 L476.2 214.9 L476.5 211.0 L476.8 214.8 L477.0 210.9 L477.2 216.1 L477.5 209.5 L477.8 215.7 L478.0 211.2 L478.2 215.0 L478.5 209.9 L478.8 214.5 L479.0 209.3 L479.2 214.5 L479.5 211.0 L479.8 213.9 L480.0 210.2 L480.2 216.2 L480.5 208.8 L480.8 215.7 L481.0 210.6 L481.2 214.1 L481.5 210.1 L481.8 215.5 L482.0 209.8 L482.2 216.3 L482.5 210.9 L482.8 216.0 L483.0 211.3 L483.2 215.3 L483.5 210.1 L483.8 214.3 L484.0 211.7 L484.2 215.3 L484.5 210.2 L484.8 215.1 L485.0 211.2 L485.2 216.1 L485.5 211.6 L485.8 216.0 L486.0 209.7 L486.2 216.0 L486.5 210.4 L486.8 214.5 L487.0 210.3 L487.2 212.5 L487.5 210.0 L487.8 214.8 L488.0 211.9 L488.2 216.7 L488.5 211.2 L488.8 214.5 L489.0 208.8 L489.2 214.7 L489.5 212.0 L489.8 215.8 L490.0 212.1 L490.2 214.7 L490.5 210.8 L490.8 215.5 L491.0 212.0 L491.2 215.3 L491.5 210.7 L491.8 215.0 L492.0 212.8 L492.2 213.7 L492.5 211.2 L492.8 216.3 L493.0 211.7 L493.2 217.6 L493.5 211.3 L493.8 216.4 L494.0 213.4 L494.2 216.1 L494.5 212.0 L494.8 217.1 L495.0 213.4 L495.2 216.8 L495.5 212.2 L495.8 217.4 L496.0 212.4 L496.2 217.1 L496.5 212.6 L496.8 218.5 L497.0 212.2 L497.2 217.6 L497.5 214.3 L497.8 218.2 L498.0 213.4 L498.2 216.6 L498.5 211.4 L498.8 216.0 L499.0 212.8 L499.2 217.8 L499.5 213.2 L499.8 215.9 L500.0 212.1 L500.2 217.6 L500.5 211.8 L500.8 215.4 L501.0 211.4 L501.2 215.4 L501.5 212.6 L501.8 216.5 L502.0 209.9 L502.2 216.3 L502.5 210.1 L502.8 213.7 L503.0 210.5 L503.2 214.0 L503.5 209.8 L503.8 213.9 L504.0 208.9 L504.2 215.2 L504.5 210.1 L504.8 213.9 L505.0 208.8 L505.2 213.5 L505.5 210.7 L505.8 214.3 L506.0 209.3 L506.2 211.2 L506.5 210.6 L506.8 213.9 L507.0 208.9 L507.2 214.4 L507.5 209.4 L507.8 215.0 L508.0 210.3 L508.2 215.0 L508.5 209.3 L508.8 214.5 L509.0 208.0 L509.2 214.8 L509.5 209.0 L509.8 214.6 L510.0 208.3 L510.2 213.7 L510.5 209.2 L510.8 212.0 L511.0 209.5 L511.2 213.7 L511.5 207.6 L511.8 213.1 L512.0 207.6 L512.2 210.6 L512.5 208.0 L512.8 212.8 L513.0 207.8 L513.2 209.6 L513.5 208.8 L513.8 211.8 L514.0 209.7 L514.2 214.0 L514.5 209.6 L514.8 212.7 L515.0 209.9 L515.2 213.8 L515.5 210.1 L515.8 214.8 L516.0 210.3 L516.2 213.6 L516.5 210.4 L516.8 215.5 L517.0 210.5 L517.2 215.0 L517.5 209.9 L517.8 214.5 L518.0 209.8 L518.2 215.5 L518.5 209.3 L518.8 212.9 L519.0 209.7 L519.2 216.3 L519.5 209.6 L519.8 216.1 L520.0 211.5 L520.2 213.6 L520.5 210.0 L520.8 217.2 L521.0 210.7 L521.2 217.0 L521.5 212.5 L521.8 215.4 L522.0 211.1 L522.2 216.5 L522.5 211.7 L522.8 218.0 L523.0 213.7 L523.2 217.1 L523.5 213.3 L523.8 219.0 L524.0 213.2 L524.2 218.2 L524.5 213.8 L524.8 218.9 L525.0 214.9 L525.2 218.1 L525.5 215.4 L525.8 219.5 L526.0 215.3 L526.2 219.7 L526.5 214.1 L526.8 218.9 L527.0 216.2 L527.2 219.1 L527.5 214.1 L527.8 220.4 L528.0 215.4 L528.2 219.7 L528.5 217.1 L528.8 219.8 L529.0 216.2 L529.2 221.5 L529.5 215.8 L529.8 220.3 L530.0 217.0 L530.2 221.4 L530.5 218.0 L530.8 221.4 L531.0 218.4 L531.2 221.3 L531.5 216.7 L531.8 220.9 L532.0 216.7 L532.2 222.9 L532.5 217.5 L532.8 217.9 L533.0 218.5 L533.2 223.1 L533.5 216.1 L533.8 222.3 L534.0 219.0 L534.2 222.5 L534.5 219.5 L534.8 223.7 L535.0 219.7 L535.2 223.4 L535.5 218.7 L535.8 223.4 L536.0 219.9 L536.2 224.7 L536.5 216.2 L536.8 225.5 L537.0 221.2 L537.2 223.9 L537.5 219.3 L537.8 225.0 L538.0 221.2 L538.2 222.9 L538.5 220.8 L538.8 224.8 L539.0 220.4 L539.2 226.7 L539.5 220.3 L539.8 227.1 L540.0 222.3 L540.2 226.8 L540.5 222.7 L540.8 227.1 L541.0 219.5 L541.2 225.8 L541.5 221.6 L541.8 225.5 L542.0 222.2 L542.2 225.3 L542.5 220.3 L542.8 227.1 L543.0 223.0 L543.2 226.9 L543.5 223.3 L543.8 227.8 L544.0 221.7 L544.2 227.9 L544.5 223.3 L544.8 227.1 L545.0 223.9 L545.2 226.3 L545.5 222.3 L545.8 228.3 L546.0 218.8 L546.2 226.8 L546.5 223.1 L546.8 227.5 L547.0 223.0 L547.2 228.4 L547.5 222.2 L547.8 227.1 L548.0 223.9 L548.2 227.5 L548.5 224.7 L548.8 227.2 L549.0 224.9 L549.2 227.5 L549.5 223.7 L549.8 227.4 L550.0 224.8 L550.2 227.5 L550.5 223.9 L550.8 228.3 L551.0 224.8 L551.2 228.2 L551.5 223.2 L551.8 229.2 L552.0 224.6 L552.2 224.6 L552.5 223.9 L552.8 228.0 L553.0 223.3 L553.2 228.6 L553.5 223.5 L553.8 228.6 L554.0 224.9 L554.2 228.8 L554.5 223.4 L554.8 224.3 L555.0 224.2 L555.2 229.1 L555.5 225.0 L555.8 228.8 L556.0 225.4 L556.2 229.0 L556.5 224.1 L556.8 227.7 L557.0 224.1 L557.2 229.2 L557.5 223.5 L557.8 228.2 L558.0 223.5 L558.2 228.7 L558.5 223.7 L558.8 229.5 L559.0 224.3 L559.2 228.1 L559.5 225.4 L559.8 228.0 L560.0 225.0 L560.2 228.1 L560.5 223.7 L560.8 228.7 L561.0 224.9 L561.2 226.3 L561.5 225.5 L561.8 230.1 L562.0 224.0 L562.2 229.4 L562.5 223.7 L562.8 229.7 L563.0 225.3 L563.2 229.3 L563.5 223.9 L563.8 226.2 L564.0 224.3 L564.2 227.4 L564.5 223.4 L564.8 228.5 L565.0 223.2 L565.2 230.1 L565.5 225.6 L565.8 229.1 L566.0 225.0 L566.2 228.2 L566.5 223.1 L566.8 229.5 L567.0 224.1 L567.2 228.7 L567.5 225.5 L567.8 228.6 L568.0 224.3 L568.2 229.6 L568.5 224.1 L568.8 228.1 L569.0 225.5 L569.2 229.8 L569.5 222.8 L569.8 229.2 L570.0 225.5 L570.2 228.2 L570.5 225.4 L570.8 228.9 L571.0 221.4 L571.2 228.4 L571.5 224.5 L571.8 229.4 L572.0 225.5 L572.2 229.5 L572.5 225.6 L572.8 229.7 L573.0 224.3 L573.2 229.8 L573.5 225.2 L573.8 228.1 L574.0 223.7 L574.2 228.3 L574.5 223.9 L574.8 228.4 L575.0 224.8 L575.2 228.8 L575.5 224.8 L575.8 226.7 L576.0 224.9 L576.2 229.5 L576.5 225.2 L576.8 229.6 L577.0 225.1 L577.2 230.1 L577.5 224.6 L577.8 229.0 L578.0 221.4 L578.2 230.1 L578.5 224.9 L578.8 225.7 L579.0 224.2 L579.2 228.2 L579.5 225.8 L579.8 228.1 L580.0 224.2 L580.2 227.6 L580.5 224.8 L580.8 228.4 L581.0 224.2 L581.2 228.8 L581.5 225.4 L581.8 228.3 L582.0 224.3 L582.2 230.1 L582.5 223.8 L582.8 228.7 L583.0 224.4 L583.2 228.3" stroke="#f01010"/>
<path d="M47.0 237.5 L47.2 232.7 L47.5 236.2 L47.8 233.4 L48.0 236.1 L48.2 233.6 L48.5 237.1 L48.8 233.9 L49.0 237.3 L49.2 230.5 L49.5 236.9 L49.8 232.5 L50.0 237.3 L50.2 233.7 L50.5 236.5 L50.8 233.5 L51.0 236.2 L51.2 233.5 L51.5 237.4 L51.8 233.8 L52.0 237.3 L52.2 232.9 L52.5 237.3 L52.8 233.0 L53.0 237.3 L53.2 233.3 L53.5 237.3 L53.8 232.7 L54.0 237.4 L54.2 232.5 L54.5 237.0 L54.8 234.2 L55.0 236.8 L55.2 233.6 L55.5 237.2 L55.8 233.9 L56.0 236.3 L56.2 230.9 L56.5 236.0 L56.8 232.9 L57.0 236.7 L57.2 232.8 L57.5 236.4 L57.8 232.6 L58.0 237.5 L58.2 233.7 L58.5 236.9 L58.8 233.2 L59.0 236.8 L59.2 233.5 L59.5 237.0 L59.8 233.6 L60.0 237.6 L60.2 234.0 L60.5 235.9 L60.8 233.5 L61.0 234.8 L61.2 232.8 L61.5 236.5 L61.8 232.9 L62.0 236.2 L62.2 232.5 L62.5 236.5 L62.8 232.6 L63.0 236.4 L63.2 232.9 L63.5 236.8 L63.8 233.1 L64.0 237.6 L64.2 233.3 L64.5 236.2 L64.8 233.3 L65.0 237.4 L65.2 232.6 L65.5 235.9 L65.8 232.6 L66.0 237.6 L66.2 232.6 L66.5 236.1 L66.8 232.8 L67.0 236.9 L67.2 233.8 L67.5 236.8 L67.8 232.9 L68.0 237.2 L68.2 233.9 L68.5 236.8 L68.8 233.2 L69.0 236.2 L69.2 233.0 L69.5 237.2 L69.8 233.8 L70.0 234.2 L70.2 233.2 L70.5 237.3 L70.8 234.0 L71.0 237.0 L71.2 233.7 L71.5 236.3 L71.8 234.0 L72.0 237.0 L72.2 234.0 L72.5 236.0 L72.8 233.7 L73.0 236.2 L73.2 233.5 L73.5 236.8 L73.8 233.5 L74.0 236.9 L74.2 231.5 L74.5 237.6 L74.8 233.7 L75.0 236.5 L75.2 233.6 L75.5 237.4 L75.8 234.3 L76.0 237.2 L76.2 233.2 L76.5 236.6 L76.8 233.8 L77.0 237.1 L77.2 232.6 L77.5 236.5 L77.8 232.9 L78.0 237.1 L78.2 232.6 L78.5 236.6 L78.8 234.1 L79.0 236.2 L79.2 233.5 L79.5 236.5 L79.8 233.7 L80.0 237.6 L80.2 233.5 L80.5 236.6 L80.8 232.9 L81.0 236.6 L81.2 233.7 L81.5 236.9 L81.8 233.7 L82.0 236.2 L82.2 234.3 L82.5 236.0 L82.8 234.1 L83.0 236.0 L83.2 233.0 L83.5 237.6 L83.8 233.3 L84.0 236.1 L84.2 233.6 L84.5 237.3 L84.8 230.6 L85.0 237.3 L85.2 232.4 L85.5 233.7 L85.8 233.2 L86.0 236.2 L86.2 233.2 L86.5 237.7 L86.8 232.6 L87.0 236.6 L87.2 233.9 L87.5 237.7 L87.8 234.0 L88.0 236.2 L88.2 231.2 L88.5 235.6 L88.8 232.9 L89.0 236.7 L89.2 233.3 L89.5 236.6 L89.8 232.8 L90.0 236.9 L90.2 234.0 L90.5 234.4 L90.8 232.9 L91.0 235.9 L91.2 233.6 L91.5 237.0 L91.8 233.6 L92.0 237.7 L92.2 233.2 L92.5 236.6 L92.8 232.7 L93.0 237.4 L93.2 232.6 L93.5 236.5 L93.8 233.9 L94.0 236.2 L94.2 233.5 L94.5 234.4 L94.8 233.0 L95.0 237.3 L95.2 232.7 L95.5 236.7 L95.8 234.2 L96.0 236.1 L96.2 234.2 L96.5 236.7 L96.8 233.9 L97.0 235.4 L97.2 233.1 L97.5 237.1 L97.8 233.7 L98.0 237.7 L98.2 233.6 L98.5 237.4 L98.8 233.6 L99.0 236.7 L99.2 233.5 L99.5 237.3 L99.8 229.7 L100.0 236.9 L100.2 234.2 L100.5 236.6 L100.8 231.2 L101.0 236.1 L101.2 231.1 L101.5 236.8 L101.8 233.1 L102.0 237.7 L102.2 234.2 L102.5 236.2 L102.8 233.5 L103.0 236.3 L103.2 233.5 L103.5 236.4 L103.8 234.0 L104.0 237.1 L104.2 233.0 L104.5 236.9 L104.8 230.4 L105.0 237.4 L105.2 233.1 L105.5 236.8 L105.8 232.7 L106.0 236.3 L106.2 233.4 L106.5 236.3 L106.8 233.6 L107.0 236.5 L107.2 233.4 L107.5 237.0 L107.8 232.8 L108.0 237.7 L108.2 234.2 L108.5 237.7 L108.8 233.4 L109.0 236.0 L109.2 234.2 L109.5 237.1 L109.8 232.7 L110.0 236.6 L110.2 233.3 L110.5 237.6 L110.8 233.8 L111.0 236.5 L111.2 234.0 L111.5 234.2 L111.8 234.1 L112.0 236.2 L112.2 233.2 L112.5 237.7 L112.8 233.2 L113.0 234.5 L113.2 232.7 L113.5 235.6 L113.8 232.8 L114.0 236.8 L114.2 234.1 L114.5 236.2 L114.8 234.0 L115.0 236.9 L115.2 232.7 L115.5 234.4 L115.8 232.7 L116.0 237.4 L116.2 234.2 L116.5 237.2 L116.8 232.6 L117.0 237.1 L117.2 234.2 L117.5 237.0 L117.8 232.8 L118.0 236.3 L118.2 234.2 L118.5 237.5 L118.8 233.5 L119.0 237.0 L119.2 233.3 L119.5 236.8 L119.8 233.1 L120.0 237.5 L120.2 234.3 L120.5 236.7 L120.8 233.1 L121.0 237.2 L121.2 233.6 L121.5 237.7 L121.8 233.8 L122.0 234.4 L122.2 233.7 L122.5 237.0 L122.8 234.0 L123.0 236.6 L123.2 232.8 L123.5 236.8 L123.8 234.4 L124.0 237.6 L124.2 234.2 L124.5 236.1 L124.8 233.9 L125.0 237.4 L125.2 233.5 L125.5 237.3 L125.8 230.1 L126.0 236.0 L126.2 233.8 L126.5 236.2 L126.8 232.7 L127.0 236.5 L127.2 234.1 L127.5 237.3 L127.8 232.3 L128.0 237.8 L128.2 234.3 L128.5 236.9 L128.8 233.3 L129.0 237.5 L129.2 232.8 L129.5 236.9 L129.8 233.6 L130.0 237.3 L130.2 233.4 L130.5 236.1 L130.8 233.0 L131.0 234.6 L131.2 233.2 L131.5 237.3 L131.8 233.2 L132.0 237.8 L132.2 231.9 L132.5 237.6 L132.8 234.2 L133.0 237.4 L133.2 233.8 L133.5 234.8 L133.8 232.9 L134.0 236.6 L134.2 233.1 L134.5 237.1 L134.8 233.3 L135.0 237.1 L135.2 233.6 L135.5 236.7 L135.8 233.6 L136.0 236.5 L136.2 233.6 L136.5 236.8 L136.8 234.2 L137.0 236.6 L137.2 233.2 L137.5 237.0 L137.8 232.8 L138.0 236.8 L138.2 233.8 L138.5 237.6 L138.8 233.2 L139.0 236.9 L139.2 234.0 L139.5 237.5 L139.8 234.1 L140.0 237.5 L140.2 233.3 L140.5 237.4 L140.8 234.4 L141.0 236.2 L141.2 233.6 L141.5 237.9 L141.8 234.2 L142.0 236.3 L142.2 233.2 L142.5 236.8 L142.8 233.7 L143.0 237.8 L143.2 233.0 L143.5 237.0 L143.8 232.9 L144.0 236.5 L144.2 233.0 L144.5 236.8 L144.8 233.0 L145.0 236.6 L145.2 234.0 L145.5 237.9 L145.8 234.0 L146.0 235.4 L146.2 232.7 L146.5 237.7 L146.8 233.5 L147.0 234.3 L147.2 233.6 L147.5 236.7 L147.8 233.1 L148.0 237.4 L148.2 233.0 L148.5 237.5 L148.8 233.9 L149.0 236.7 L149.2 234.0 L149.5 238.0 L149.8 233.0 L150.0 237.9 L150.2 233.7 L150.5 236.4 L150.8 233.2 L151.0 237.6 L151.2 231.5 L151.5 236.6 L151.8 233.1 L152.0 237.1 L152.2 233.0 L152.5 236.5 L152.8 233.6 L153.0 236.1 L153.2 233.6 L153.5 236.0 L153.8 233.4 L154.0 236.3 L154.2 233.2 L154.5 236.0 L154.8 233.2 L155.0 237.1 L155.2 232.3 L155.5 235.9 L155.8 232.6 L156.0 235.2 L156.2 232.6 L156.5 235.9 L156.8 232.4 L157.0 236.0 L157.2 232.0 L157.5 234.8 L157.8 232.1 L158.0 235.0 L158.2 231.4 L158.5 235.0 L158.8 230.3 L159.0 233.8 L159.2 229.8 L159.5 234.2 L159.8 230.4 L160.0 232.6 L160.2 229.6 L160.5 233.6 L160.8 229.4 L161.0 233.0 L161.2 229.2 L161.5 232.6 L161.8 229.6 L162.0 232.6 L162.2 228.3 L162.5 232.0 L162.8 228.3 L163.0 231.7 L163.2 228.1 L163.5 232.1 L163.8 227.2 L164.0 227.8 L164.2 226.3 L164.5 230.1 L164.8 227.4 L165.0 227.1 L165.2 226.6 L165.5 230.2 L165.8 225.5 L166.0 230.3 L166.2 226.8 L166.5 226.3 L166.8 226.3 L167.0 228.6 L167.2 224.5 L167.5 229.4 L167.8 225.2 L168.0 228.0 L168.2 224.2 L168.5 224.4 L168.8 224.4 L169.0 228.5 L169.2 223.8 L169.5 228.1 L169.8 224.5 L170.0 226.8 L170.2 223.2 L170.5 227.9 L170.8 224.6 L171.0 228.6 L171.2 224.3 L171.5 227.1 L171.8 224.1 L172.0 227.9 L172.2 225.1 L172.5 228.7 L172.8 225.0 L173.0 229.4 L173.2 225.2 L173.5 228.3 L173.8 225.7 L174.0 228.3 L174.2 225.4 L174.5 229.1 L174.8 226.5 L175.0 228.6 L175.2 226.3 L175.5 229.2 L175.8 225.1 L176.0 229.2 L176.2 224.2 L176.5 228.5 L176.8 224.6 L177.0 228.6 L177.2 224.7 L177.5 227.3 L177.8 224.0 L178.0 226.6 L178.2 223.7 L178.5 225.7 L178.8 222.5 L179.0 225.9 L179.2 223.0 L179.5 222.2 L179.8 221.5 L180.0 224.4 L180.2 221.7 L180.5 224.2 L180.8 220.8 L181.0 222.2 L181.2 220.5 L181.5 224.4 L181.8 221.4 L182.0 223.9 L182.2 221.2 L182.5 223.0 L182.8 220.7 L183.0 223.5 L183.2 219.4 L183.5 222.6 L183.8 220.6 L184.0 222.4 L184.2 219.0 L184.5 219.7 L184.8 219.4 L185.0 222.5 L185.2 220.0 L185.5 222.7 L185.8 219.3 L186.0 223.4 L186.2 219.9 L186.5 223.5 L186.8 219.0 L187.0 222.8 L187.2 219.9 L187.5 222.3 L187.8 218.7 L188.0 222.0 L188.2 219.2 L188.5 222.9 L188.8 219.9 L189.0 223.5 L189.2 219.3 L189.5 221.9 L189.8 220.0 L190.0 222.8 L190.2 219.7 L190.5 224.4 L190.8 220.6 L191.0 223.8 L191.2 222.1 L191.5 224.2 L191.8 222.2 L192.0 225.6 L192.2 222.8 L192.5 226.5 L192.8 222.4 L193.0 227.0 L193.2 223.1 L193.5 228.1 L193.8 224.8 L194.0 228.0 L194.2 225.6 L194.5 228.7 L194.8 224.3 L195.0 227.1 L195.2 223.7 L195.5 227.8 L195.8 223.7 L196.0 224.8 L196.2 222.0 L196.5 226.2 L196.8 223.1 L197.0 224.8 L197.2 220.1 L197.5 224.4 L197.8 222.2 L198.0 223.7 L198.2 221.4 L198.5 223.4 L198.8 220.5 L199.0 223.1 L199.2 220.7 L199.5 222.4 L199.8 219.6 L200.0 223.3 L200.2 220.1 L200.5 223.2 L200.8 220.1 L201.0 222.7 L201.2 220.4 L201.5 223.3 L201.8 217.3 L202.0 224.0 L202.2 221.4 L202.5 224.4 L202.8 221.3 L203.0 225.4 L203.2 220.4 L203.5 226.0 L203.8 222.2 L204.0 225.6 L204.2 221.1 L204.5 226.3 L204.8 223.2 L205.0 225.4 L205.2 225.0 L205.5 223.7 L205.8 221.5 L206.0 220.8 L206.2 222.1 L206.5 220.3 L206.8 224.2 L207.0 222.7 L207.2 224.2 L207.5 224.5 L207.8 224.6 L208.0 223.2 L208.2 225.3 L208.5 224.7 L208.8 223.3 L209.0 222.2 L209.2 222.2 L209.5 221.2 L209.8 221.1 L210.0 219.8 L210.2 222.4 L210.5 223.3 L210.8 221.5 L211.0 223.8 L211.2 223.4 L211.5 222.3 L211.8 222.0 L212.0 222.0 L212.2 221.4 L212.5 220.4 L212.8 218.9 L213.0 219.0 L213.2 221.2 L213.5 221.2 L213.8 224.6 L214.0 224.5 L214.2 224.5 L214.5 225.6 L214.8 227.0 L215.0 224.9 L215.2 225.8 L215.5 224.3 L215.8 222.3 L216.0 222.3 L216.2 222.0 L216.5 224.2 L216.8 225.1 L217.0 227.0 L217.2 226.4 L217.5 228.5 L217.8 226.1 L218.0 228.1 L218.2 227.4 L218.5 228.0 L218.8 225.7 L219.0 226.4 L219.2 223.4 L219.5 225.8 L219.8 226.1 L220.0 224.7 L220.2 226.8 L220.5 229.3 L220.8 228.1 L221.0 229.6 L221.2 230.9 L221.5 227.0 L221.8 226.3 L222.0 227.3 L222.2 226.7 L222.5 227.4 L222.8 224.7 L223.0 226.3 L223.2 227.5 L223.5 226.9 L223.8 230.0 L224.0 227.9 L224.2 227.7 L224.5 230.7 L224.8 230.6 L225.0 228.5 L225.2 225.7 L225.5 226.1 L225.8 224.7 L226.0 225.2 L226.2 225.7 L226.5 227.5 L226.8 227.6 L227.0 228.3 L227.2 230.3 L227.5 227.4 L227.8 230.1 L228.0 230.4 L228.2 229.7 L228.5 227.9 L228.8 226.2 L229.0 226.7 L229.2 225.8 L229.5 226.0 L229.8 226.6 L230.0 225.2 L230.2 227.8 L230.5 230.0 L230.8 228.7 L231.0 229.5 L231.2 229.8 L231.5 227.9 L231.8 225.8 L232.0 228.0 L232.2 225.8 L232.5 226.4 L232.8 225.9 L233.0 226.5 L233.2 227.8 L233.5 226.4 L233.8 227.5 L234.0 229.7 L234.2 229.4 L234.5 229.8 L234.8 228.1 L235.0 226.2 L235.2 226.5 L235.5 227.8 L235.8 224.9 L236.0 223.8 L236.2 226.5 L236.5 224.9 L236.8 227.0 L237.0 228.7 L237.2 227.1 L237.5 229.9 L237.8 226.7 L238.0 229.1 L238.2 228.3 L238.5 227.1 L238.8 227.8 L239.0 226.6 L239.2 224.0 L239.5 226.0 L239.8 226.1 L240.0 225.5 L240.2 225.7 L240.5 229.1 L240.8 229.0 L241.0 226.9 L241.2 228.7 L241.5 225.5 L241.8 227.4 L242.0 226.9 L242.2 223.6 L242.5 225.9 L242.8 223.2 L243.0 223.9 L243.2 224.4 L243.5 227.2 L243.8 226.8 L244.0 226.0 L244.2 227.1 L244.5 228.3 L244.8 226.9 L245.0 224.8 L245.2 224.7 L245.5 225.8 L245.8 223.6 L246.0 225.7 L246.2 224.8 L246.5 227.1 L246.8 225.9 L247.0 228.0 L247.2 226.3 L247.5 227.8 L247.8 225.9 L248.0 228.4 L248.2 225.4 L248.5 226.7 L248.8 223.2 L249.0 224.9 L249.2 224.4 L249.5 224.4 L249.8 224.8 L250.0 227.1 L250.2 227.8 L250.5 228.5 L250.8 228.9 L251.0 228.3 L251.2 226.3 L251.5 226.8 L251.8 226.2 L252.0 225.3 L252.2 223.4 L252.5 224.4 L252.8 222.3 L253.0 223.4 L253.2 224.7 L253.5 227.1 L253.8 226.7 L254.0 225.3 L254.2 226.7 L254.5 225.8 L254.8 225.0 L255.0 224.4 L255.2 225.7 L255.5 223.6 L255.8 221.8 L256.0 223.4 L256.2 225.8 L256.5 223.1 L256.8 224.6 L257.0 227.2 L257.2 227.4 L257.5 226.6 L257.8 224.0 L258.0 225.8 L258.2 224.0 L258.5 225.0 L258.8 221.6 L259.0 223.1 L259.2 221.2 L259.5 221.7 L259.8 224.5 L260.0 224.5 L260.2 224.1 L260.5 227.0 L260.8 227.0 L261.0 226.7 L261.2 225.5 L261.5 224.5 L261.8 225.4 L262.0 223.1 L262.2 220.8 L262.5 221.4 L262.8 221.2 L263.0 225.0 L263.2 225.0 L263.5 223.8 L263.8 224.6 L264.0 225.4 L264.2 225.6 L264.5 226.5 L264.8 224.0 L265.0 221.6 L265.2 222.3 L265.5 221.4 L265.8 223.0 L266.0 223.5 L266.2 221.3 L266.5 222.6 L266.8 222.4 L267.0 225.5 L267.2 226.0 L267.5 225.9 L267.8 223.3 L268.0 224.1 L268.2 222.0 L268.5 221.9 L268.8 221.2 L269.0 221.7 L269.2 222.9 L269.5 223.5 L269.8 221.6 L270.0 223.8 L270.2 225.8 L270.5 224.1 L270.8 225.5 L271.0 223.2 L271.2 224.5 L271.5 222.2 L271.8 221.9 L272.0 219.7 L272.2 218.3 L272.5 220.6 L272.8 220.6 L273.0 221.2 L273.2 222.3 L273.5 223.6 L273.8 224.5 L274.0 225.4 L274.2 225.4 L274.5 223.4 L274.8 221.9 L275.0 223.4 L275.2 219.8 L275.5 220.6 L275.8 220.0 L276.0 222.8 L276.2 222.1 L276.5 221.5 L276.8 223.0 L277.0 222.7 L277.2 222.4 L277.5 222.1 L277.8 223.0 L278.0 223.3 L278.2 222.0 L278.5 219.5 L278.8 221.2 L279.0 222.0 L279.2 220.5 L279.5 220.9 L279.8 223.5 L280.0 222.8 L280.2 221.8 L280.5 224.8 L280.8 223.5 L281.0 224.2 L281.2 222.9 L281.5 220.5 L281.8 220.2 L282.0 218.1 L282.2 219.3 L282.5 220.2 L282.8 220.1 L283.0 219.6 L283.2 220.4 L283.5 223.3 L283.8 225.0 L284.0 224.5 L284.2 222.9 L284.5 219.9 L284.8 220.6 L285.0 221.3 L285.2 217.7 L285.5 217.9 L285.8 221.5 L286.0 219.1 L286.2 222.3 L286.5 221.7 L286.8 221.6 L287.0 220.7 L287.2 220.7 L287.5 220.2 L287.8 222.4 L288.0 218.7 L288.2 219.7 L288.5 217.8 L288.8 219.6 L289.0 220.5 L289.2 218.7 L289.5 220.0 L289.8 221.0 L290.0 221.4 L290.2 223.8 L290.5 220.2 L290.8 220.7 L291.0 218.5 L291.2 220.0 L291.5 220.2 L291.8 219.8 L292.0 219.0 L292.2 218.7 L292.5 220.1 L292.8 219.1 L293.0 221.4 L293.2 219.4 L293.5 219.9 L293.8 222.7 L294.0 222.2 L294.2 220.7 L294.5 220.4 L294.8 219.5 L295.0 219.5 L295.2 216.5 L295.5 217.7 L295.8 218.8 L296.0 218.7 L296.2 219.2 L296.5 217.3 L296.8 220.5 L297.0 221.8 L297.2 218.0 L297.5 221.9 L297.8 219.4 L298.0 217.2 L298.2 219.5 L298.5 216.7 L298.8 218.6 L299.0 217.6 L299.2 219.8 L299.5 220.6 L299.8 220.2 L300.0 221.2 L300.2 219.7 L300.5 221.5 L300.8 221.2 L301.0 219.4 L301.2 220.5 L301.5 216.8 L301.8 217.4 L302.0 218.9 L302.2 216.5 L302.5 218.0 L302.8 218.5 L303.0 221.0 L303.2 221.3 L303.5 222.8 L303.8 220.3 L304.0 218.9 L304.2 220.3 L304.5 218.3 L304.8 218.8 L305.0 217.3 L305.2 218.9 L305.5 217.1 L305.8 217.8 L306.0 218.0 L306.2 219.7 L306.5 219.3 L306.8 219.8 L307.0 220.7 L307.2 221.7 L307.5 220.0 L307.8 220.5 L308.0 218.6 L308.2 217.4 L308.5 217.8 L308.8 217.6 L309.0 217.3 L309.2 218.8 L309.5 219.8 L309.8 219.5 L310.0 220.6 L310.2 220.3 L310.5 220.8 L310.8 219.6 L311.0 221.1 L311.2 218.6 L311.5 217.9 L311.8 217.5 L312.0 219.4 L312.2 220.4 L312.5 217.8 L312.8 219.3 L313.0 222.1 L313.2 221.2 L313.5 224.0 L313.8 218.9 L314.0 220.1 L314.2 218.9 L314.5 219.3 L314.8 218.5 L315.0 217.5 L315.2 220.4 L315.5 219.9 L315.8 219.0 L316.0 221.0 L316.2 220.6 L316.5 221.5 L316.8 221.5 L317.0 222.6 L317.2 221.5 L317.5 222.3 L317.8 219.1 L318.0 219.8 L318.2 219.4 L318.5 220.3 L318.8 217.7 L319.0 218.3 L319.2 219.4 L319.5 222.5 L319.8 221.3 L320.0 223.4 L320.2 223.3 L320.5 221.6 L320.8 222.0 L321.0 219.4 L321.2 219.8 L321.5 219.1 L321.8 219.2 L322.0 220.7 L322.2 219.6 L322.5 222.2 L322.8 222.5 L323.0 223.2 L323.2 221.3 L323.5 221.3 L323.8 221.6 L324.0 221.8 L324.2 221.8 L324.5 221.6 L324.8 219.2 L325.0 220.2 L325.2 219.1 L325.5 218.9 L325.8 220.7 L326.0 220.9 L326.2 222.2 L326.5 224.2 L326.8 223.9 L327.0 223.9 L327.2 222.1 L327.5 220.5 L327.8 221.9 L328.0 218.6 L328.2 219.6 L328.5 219.8 L328.8 220.4 L329.0 221.1 L329.2 223.1 L329.5 220.8 L329.8 223.3 L330.0 224.2 L330.2 220.7 L330.5 223.3 L330.8 221.8 L331.0 219.9 L331.2 222.1 L331.5 219.6 L331.8 219.1 L332.0 221.7 L332.2 220.5 L332.5 221.9 L332.8 222.1 L333.0 223.9 L333.2 224.1 L333.5 223.7 L333.8 221.1 L334.0 223.2 L334.2 223.2 L334.5 220.7 L334.8 221.9 L335.0 222.3 L335.2 219.3 L335.5 220.1 L335.8 221.7 L336.0 222.8 L336.2 225.2 L336.5 224.6 L336.8 223.6 L337.0 223.1 L337.2 224.9 L337.5 223.8 L337.8 220.6 L338.0 220.0 L338.2 222.7 L338.5 223.2 L338.8 220.5 L339.0 221.2 L339.2 222.7 L339.5 224.4 L339.8 224.1 L340.0 225.7 L340.2 224.4 L340.5 222.2 L340.8 223.9 L341.0 224.3 L341.2 223.7 L341.5 221.8 L341.8 221.5 L342.0 224.9 L342.2 221.9 L342.5 223.9 L342.8 223.8 L343.0 225.3 L343.2 225.8 L343.5 224.7 L343.8 225.7 L344.0 223.2 L344.2 225.2 L344.5 225.5 L344.8 222.8 L345.0 223.7 L345.2 221.3 L345.5 224.1 L345.8 225.2 L346.0 228.0 L346.2 228.5 L346.5 228.2 L346.8 229.0 L347.0 226.3 L347.2 225.3 L347.5 226.3 L347.8 226.8 L348.0 225.5 L348.2 223.4 L348.5 227.3 L348.8 226.0 L349.0 228.6 L349.2 227.7 L349.5 228.4 L349.8 229.9 L350.0 230.0 L350.2 228.3 L350.5 226.3 L350.8 224.9 L351.0 226.3 L351.2 227.0 L351.5 223.8 L351.8 225.9 L352.0 224.2 L352.2 227.4 L352.5 226.3 L352.8 229.1 L353.0 225.5 L353.2 228.5 L353.5 225.6 L353.8 225.8 L354.0 227.9 L354.2 223.8 L354.5 223.3 L354.8 223.8 L355.0 224.0 L355.2 225.1 L355.5 225.4 L355.8 225.6 L356.0 225.7 L356.2 227.9 L356.5 229.1 L356.8 227.7 L357.0 225.7 L357.2 225.9 L357.5 224.7 L357.8 224.8 L358.0 223.2 L358.2 223.6 L358.5 225.8 L358.8 225.1 L359.0 224.4 L359.2 226.9 L359.5 227.3 L359.8 226.5 L360.0 226.0 L360.2 226.9 L360.5 224.3 L360.8 222.5 L361.0 223.4 L361.2 223.3 L361.5 223.4 L361.8 221.7 L362.0 222.2 L362.2 225.1 L362.5 226.5 L362.8 227.4 L363.0 226.7 L363.2 224.7 L363.5 223.0 L363.8 223.5 L364.0 222.9 L364.2 223.3 L364.5 220.7 L364.8 221.6 L365.0 222.3 L365.2 225.0 L365.5 225.3 L365.8 225.0 L366.0 223.1 L366.2 226.0 L366.5 224.2 L366.8 225.9 L367.0 221.8 L367.2 222.4 L367.5 224.1 L367.8 221.9 L368.0 219.7 L368.2 222.9 L368.5 223.4 L368.8 221.0 L369.0 224.7 L369.2 224.0 L369.5 225.8 L369.8 221.6 L370.0 223.3 L370.2 224.2 L370.5 224.3 L370.8 223.5 L371.0 219.7 L371.2 219.6 L371.5 220.7 L371.8 220.2 L372.0 221.1 L372.2 223.2 L372.5 223.9 L372.8 223.8 L373.0 225.5 L373.2 225.4 L373.5 224.7 L373.8 223.0 L374.0 222.4 L374.2 220.0 L374.5 218.0 L374.8 222.2 L375.0 220.9 L375.2 223.8 L375.5 222.2 L375.8 223.5 L376.0 223.2 L376.2 225.4 L376.5 223.0 L376.8 223.1 L377.0 223.2 L377.2 224.0 L377.5 222.4 L377.8 222.4 L378.0 219.5 L378.2 223.2 L378.5 221.2 L378.8 223.9 L379.0 222.1 L379.2 222.7 L379.5 224.8 L379.8 222.7 L380.0 223.0 L380.2 223.1 L380.5 220.5 L380.8 223.3 L381.0 219.9 L381.2 223.3 L381.5 221.3 L381.8 224.6 L382.0 223.8 L382.2 223.1 L382.5 225.7 L382.8 226.4 L383.0 225.1 L383.2 223.2 L383.5 225.9 L383.8 222.4 L384.0 222.2 L384.2 221.8 L384.5 223.8 L384.8 222.8 L385.0 223.1 L385.2 225.3 L385.5 224.9 L385.8 227.1 L386.0 225.3 L386.2 227.2 L386.5 226.2 L386.8 226.5 L387.0 225.2 L387.2 223.5 L387.5 222.3 L387.8 224.9 L388.0 222.5 L388.2 225.0 L388.5 223.4 L388.8 226.0 L389.0 224.7 L389.2 225.9 L389.5 227.0 L389.8 227.9 L390.0 225.3 L390.2 226.2 L390.5 225.2 L390.8 224.4 L391.0 224.6 L391.2 224.2 L391.5 224.0 L391.8 223.3 L392.0 223.8 L392.2 225.4 L392.5 226.7 L392.8 228.1 L393.0 226.7 L393.2 225.5 L393.5 225.9 L393.8 222.0 L394.0 223.0 L394.2 220.7 L394.5 220.6 L394.8 222.6 L395.0 223.4 L395.2 223.5 L395.5 222.6 L395.8 226.8 L396.0 225.0 L396.2 225.8 L396.5 225.0 L396.8 222.4 L397.0 222.4 L397.2 223.9 L397.5 221.7 L397.8 221.8 L398.0 223.0 L398.2 220.5 L398.5 223.0 L398.8 221.8 L399.0 223.5 L399.2 223.7 L399.5 223.5 L399.8 224.8 L400.0 221.8 L400.2 223.8 L400.5 220.2 L400.8 219.0 L401.0 221.2 L401.2 221.8 L401.5 222.7 L401.8 223.0 L402.0 223.8 L402.2 222.0 L402.5 223.1 L402.8 224.6 L403.0 223.9 L403.2 221.8 L403.5 219.7 L403.8 222.1 L404.0 219.8 L404.2 220.5 L404.5 218.2 L404.8 218.9 L405.0 219.3 L405.2 221.6 L405.5 221.8 L405.8 223.3 L406.0 221.8 L406.2 223.6 L406.5 223.1 L406.8 220.2 L407.0 219.1 L407.2 220.9 L407.5 218.7 L407.8 220.5 L408.0 218.1 L408.2 220.3 L408.5 219.6 L408.8 221.9 L409.0 220.4 L409.2 222.0 L409.5 220.6 L409.8 219.8 L410.0 218.8 L410.2 221.5 L410.5 218.8 L410.8 218.6 L411.0 218.8 L411.2 218.5 L411.5 220.4 L411.8 218.2 L412.0 221.4 L412.2 223.2 L412.5 220.6 L412.8 222.4 L413.0 222.6 L413.2 218.7 L413.5 218.0 L413.8 219.3 L414.0 214.3 L414.2 217.1 L414.5 220.0 L414.8 220.3 L415.0 220.0 L415.2 218.5 L415.5 221.4 L415.8 221.7 L416.0 220.2 L416.2 219.1 L416.5 219.1 L416.8 219.6 L417.0 220.6 L417.2 217.3 L417.5 219.2 L417.8 218.3 L418.0 221.0 L418.2 218.6 L418.5 219.7 L418.8 220.8 L419.0 220.9 L419.2 222.7 L419.5 221.4 L419.8 219.4 L420.0 218.1 L420.2 222.2 L420.5 218.4 L420.8 222.3 L421.0 217.4 L421.2 220.9 L421.5 219.1 L421.8 222.1 L422.0 218.3 L422.2 221.1 L422.5 217.7 L422.8 221.9 L423.0 218.8 L423.2 220.9 L423.5 218.1 L423.8 221.9 L424.0 218.4 L424.2 221.4 L424.5 217.5 L424.8 220.9 L425.0 218.9 L425.2 221.9 L425.5 217.6 L425.8 218.7 L426.0 218.2 L426.2 220.3 L426.5 217.8 L426.8 221.1 L427.0 217.7 L427.2 221.3 L427.5 217.6 L427.8 222.2 L428.0 219.2 L428.2 222.6 L428.5 219.2 L428.8 222.2 L429.0 218.4 L429.2 222.2 L429.5 219.3 L429.8 221.4 L430.0 219.2 L430.2 221.2 L430.5 218.3 L430.8 219.6 L431.0 218.6 L431.2 219.7 L431.5 219.3 L431.8 222.3 L432.0 218.8 L432.2 222.6 L432.5 218.9 L432.8 222.2 L433.0 219.4 L433.2 222.4 L433.5 219.7 L433.8 223.4 L434.0 218.5 L434.2 221.7 L434.5 218.3 L434.8 221.7 L435.0 218.9 L435.2 222.9 L435.5 219.7 L435.8 222.0 L436.0 218.5 L436.2 222.8 L436.5 219.3 L436.8 221.7 L437.0 220.2 L437.2 223.6 L437.5 220.0 L437.8 222.5 L438.0 219.1 L438.2 223.4 L438.5 218.8 L438.8 223.5 L439.0 220.0 L439.2 219.7 L439.5 219.2 L439.8 223.2 L440.0 220.5 L440.2 223.5 L440.5 219.7 L440.8 222.6 L441.0 219.9 L441.2 223.9 L441.5 220.1 L441.8 222.4 L442.0 220.4 L442.2 224.0 L442.5 219.9 L442.8 221.0 L443.0 215.6 L443.2 223.4 L443.5 219.8 L443.8 223.2 L444.0 218.9 L444.2 222.2 L444.5 219.4 L444.8 219.2 L445.0 219.9 L445.2 224.0 L445.5 217.4 L445.8 223.6 L446.0 219.2 L446.2 223.8 L446.5 218.8 L446.8 223.2 L447.0 219.1 L447.2 223.5 L447.5 220.0 L447.8 223.8 L448.0 220.0 L448.2 221.2 L448.5 220.4 L448.8 222.9 L449.0 219.0 L449.2 223.4 L449.5 219.7 L449.8 222.7 L450.0 219.7 L450.2 222.5 L450.5 219.1 L450.8 222.4 L451.0 220.4 L451.2 222.4 L451.5 220.4 L451.8 223.1 L452.0 219.9 L452.2 223.1 L452.5 220.2 L452.8 222.7 L453.0 219.7 L453.2 221.4 L453.5 220.1 L453.8 223.0 L454.0 220.2 L454.2 223.0 L454.5 220.1 L454.8 223.0 L455.0 219.8 L455.2 223.8 L455.5 220.8 L455.8 222.8 L456.0 220.6 L456.2 223.2 L456.5 220.5 L456.8 223.0 L457.0 219.7 L457.2 223.1 L457.5 219.8 L457.8 223.8 L458.0 219.0 L458.2 224.5 L458.5 217.2 L458.8 224.4 L459.0 220.4 L459.2 223.2 L459.5 220.9 L459.8 223.8 L460.0 219.4 L460.2 224.6 L460.5 221.2 L460.8 224.7 L461.0 220.1 L461.2 223.7 L461.5 221.0 L461.8 223.4 L462.0 219.7 L462.2 224.6 L462.5 220.2 L462.8 224.5 L463.0 220.1 L463.2 221.9 L463.5 220.4 L463.8 223.4 L464.0 220.9 L464.2 223.5 L464.5 218.9 L464.8 224.0 L465.0 220.6 L465.2 223.9 L465.5 220.7 L465.8 223.2 L466.0 220.5 L466.2 223.7 L466.5 219.8 L466.8 223.9 L467.0 220.6 L467.2 223.3 L467.5 221.3 L467.8 222.7 L468.0 220.4 L468.2 225.2 L468.5 217.4 L468.8 224.3 L469.0 221.7 L469.2 224.3 L469.5 219.0 L469.8 223.8 L470.0 221.5 L470.2 224.6 L470.5 220.0 L470.8 224.7 L471.0 220.0 L471.2 224.8 L471.5 221.2 L471.8 225.1 L472.0 221.0 L472.2 224.6 L472.5 220.1 L472.8 224.0 L473.0 220.4 L473.2 224.8 L473.5 217.8 L473.8 223.4 L474.0 221.1 L474.2 224.6 L474.5 220.7 L474.8 224.2 L475.0 220.5 L475.2 224.0 L475.5 220.2 L475.8 224.4 L476.0 220.0 L476.2 223.4 L476.5 220.4 L476.8 224.6 L477.0 220.0 L477.2 223.9 L477.5 221.0 L477.8 223.9 L478.0 220.5 L478.2 224.6 L478.5 220.5 L478.8 223.8 L479.0 220.6 L479.2 220.4 L479.5 220.7 L479.8 224.6 L480.0 221.1 L480.2 223.1 L480.5 219.3 L480.8 223.8 L481.0 220.7 L481.2 223.7 L481.5 220.2 L481.8 223.9 L482.0 221.1 L482.2 223.5 L482.5 220.2 L482.8 224.1 L483.0 221.0 L483.2 223.1 L483.5 220.9 L483.8 224.7 L484.0 220.0 L484.2 223.6 L484.5 220.8 L484.8 224.1 L485.0 221.2 L485.2 223.4 L485.5 219.9 L485.8 223.8 L486.0 221.5 L486.2 220.9 L486.5 221.3 L486.8 223.2 L487.0 219.3 L487.2 223.9 L487.5 220.7 L487.8 224.9 L488.0 219.9 L488.2 224.4 L488.5 221.4 L488.8 223.8 L489.0 220.6 L489.2 224.8 L489.5 217.2 L489.8 224.4 L490.0 221.3 L490.2 224.3 L490.5 220.9 L490.8 224.4 L491.0 222.3 L491.2 225.1 L491.5 221.9 L491.8 225.2 L492.0 222.7 L492.2 225.0 L492.5 222.5 L492.8 225.2 L493.0 222.6 L493.2 226.4 L493.5 219.2 L493.8 226.5 L494.0 222.8 L494.2 226.8 L494.5 222.3 L494.8 225.9 L495.0 222.6 L495.2 227.4 L495.5 219.9 L495.8 226.8 L496.0 223.5 L496.2 228.2 L496.5 223.2 L496.8 227.9 L497.0 224.0 L497.2 227.7 L497.5 224.6 L497.8 228.1 L498.0 223.5 L498.2 227.2 L498.5 221.7 L498.8 227.8 L499.0 222.5 L499.2 224.5 L499.5 222.5 L499.8 226.0 L500.0 223.0 L500.2 227.0 L500.5 222.2 L500.8 225.0 L501.0 223.0 L501.2 225.2 L501.5 221.7 L501.8 225.8 L502.0 218.8 L502.2 225.7 L502.5 221.2 L502.8 224.2 L503.0 220.8 L503.2 224.0 L503.5 220.9 L503.8 224.3 L504.0 220.0 L504.2 224.6 L504.5 220.9 L504.8 224.8 L505.0 220.5 L505.2 223.2 L505.5 220.4 L505.8 223.1 L506.0 219.1 L506.2 222.6 L506.5 219.2 L506.8 223.7 L507.0 219.2 L507.2 223.3 L507.5 220.0 L507.8 222.1 L508.0 219.1 L508.2 222.4 L508.5 218.0 L508.8 221.7 L509.0 219.2 L509.2 222.7 L509.5 218.5 L509.8 222.4 L510.0 217.1 L510.2 220.6 L510.5 216.9 L510.8 221.2 L511.0 218.3 L511.2 220.3 L511.5 218.2 L511.8 218.7 L512.0 216.5 L512.2 220.2 L512.5 214.4 L512.8 219.8 L513.0 215.9 L513.2 220.6 L513.5 216.6 L513.8 220.1 L514.0 217.7 L514.2 221.0 L514.5 214.0 L514.8 221.5 L515.0 217.4 L515.2 221.7 L515.5 218.2 L515.8 219.0 L516.0 217.3 L516.2 221.1 L516.5 218.0 L516.8 221.7 L517.0 218.0 L517.2 222.0 L517.5 218.3 L517.8 221.8 L518.0 219.1 L518.2 222.0 L518.5 218.6 L518.8 223.0 L519.0 219.9 L519.2 223.7 L519.5 218.7 L519.8 222.7 L520.0 219.1 L520.2 223.0 L520.5 219.5 L520.8 224.4 L521.0 220.9 L521.2 223.0 L521.5 220.9 L521.8 224.2 L522.0 220.6 L522.2 224.1 L522.5 218.6 L522.8 225.4 L523.0 222.0 L523.2 225.6 L523.5 221.0 L523.8 224.7 L524.0 222.3 L524.2 225.2 L524.5 223.3 L524.8 226.7 L525.0 222.4 L525.2 224.1 L525.5 224.0 L525.8 226.2 L526.0 222.9 L526.2 228.0 L526.5 224.5 L526.8 225.3 L527.0 224.0 L527.2 227.1 L527.5 224.0 L527.8 228.6 L528.0 225.2 L528.2 229.1 L528.5 225.7 L528.8 227.9 L529.0 225.9 L529.2 229.5 L529.5 224.1 L529.8 226.8 L530.0 226.2 L530.2 229.1 L530.5 226.5 L530.8 229.4 L531.0 225.4 L531.2 229.5 L531.5 227.7 L531.8 229.7 L532.0 227.4 L532.2 230.6 L532.5 228.1 L532.8 230.8 L533.0 228.8 L533.2 230.9 L533.5 228.9 L533.8 231.2 L534.0 228.6 L534.2 231.7 L534.5 229.0 L534.8 232.3 L535.0 229.5 L535.2 231.5 L535.5 229.6 L535.8 231.9 L536.0 229.9 L536.2 230.3 L536.5 231.0 L536.8 231.4 L537.0 230.6 L537.2 232.6 L537.5 230.7 L537.8 233.9 L538.0 231.5 L538.2 233.3 L538.5 231.7 L538.8 234.5 L539.0 231.4 L539.2 233.0 L539.5 232.8 L539.8 234.9 L540.0 232.7 L540.2 234.4 L540.5 232.4 L540.8 234.4 L541.0 232.9 L541.2 234.5 L541.5 233.4 L541.8 235.8 L542.0 233.5 L542.2 235.2 L542.5 233.0 L542.8 235.2 L543.0 233.3 L543.2 234.3 L543.5 232.9 L543.8 235.8 L544.0 233.3 L544.2 235.8 L544.5 234.2 L544.8 235.5 L545.0 234.3 L545.2 233.4 L545.5 234.6 L545.8 236.9 L546.0 233.8 L546.2 236.5 L546.5 234.9 L546.8 236.8 L547.0 233.1 L547.2 236.9 L547.5 235.1 L547.8 237.5 L548.0 234.4 L548.2 237.3 L548.5 235.1 L548.8 235.8 L549.0 235.5 L549.2 237.2 L549.5 235.2 L549.8 238.0 L550.0 235.5 L550.2 237.7 L550.5 232.8 L550.8 237.5 L551.0 235.4 L551.2 238.3 L551.5 234.9 L551.8 237.7 L552.0 235.9 L552.2 237.7 L552.5 235.0 L552.8 238.0 L553.0 236.0 L553.2 237.3 L553.5 235.0 L553.8 237.4 L554.0 236.2 L554.2 237.5 L554.5 235.5 L554.8 237.3 L555.0 235.6 L555.2 236.6 L555.5 235.7 L555.8 238.5 L556.0 235.3 L556.2 238.3 L556.5 235.8 L556.8 237.6 L557.0 236.4 L557.2 238.0 L557.5 235.3 L557.8 238.1 L558.0 235.6 L558.2 237.7 L558.5 236.4 L558.8 238.1 L559.0 236.4 L559.2 238.5 L559.5 234.6 L559.8 238.0 L560.0 236.5 L560.2 238.7 L560.5 233.9 L560.8 237.9 L561.0 236.3 L561.2 238.3 L561.5 233.0 L561.8 238.5 L562.0 235.5 L562.2 237.9 L562.5 236.4 L562.8 238.3 L563.0 235.7 L563.2 238.0 L563.5 233.8 L563.8 237.8 L564.0 236.1 L564.2 238.4 L564.5 235.9 L564.8 238.8 L565.0 236.2 L565.2 235.5 L565.5 235.5 L565.8 238.8 L566.0 235.8 L566.2 235.3 L566.5 236.1 L566.8 238.3 L567.0 236.3 L567.2 238.4 L567.5 235.7 L567.8 238.2 L568.0 236.2 L568.2 238.7 L568.5 235.8 L568.8 237.7 L569.0 235.7 L569.2 238.9 L569.5 236.3 L569.8 238.7 L570.0 235.6 L570.2 238.0 L570.5 236.0 L570.8 235.8 L571.0 235.8 L571.2 238.2 L571.5 236.7 L571.8 237.7 L572.0 236.1 L572.2 238.2 L572.5 235.5 L572.8 237.8 L573.0 236.1 L573.2 238.7 L573.5 235.6 L573.8 238.8 L574.0 235.7 L574.2 238.8 L574.5 235.6 L574.8 238.2 L575.0 233.9 L575.2 238.4 L575.5 236.3 L575.8 238.6 L576.0 235.9 L576.2 238.2 L576.5 236.2 L576.8 238.1 L577.0 236.3 L577.2 237.9 L577.5 236.1 L577.8 236.9 L578.0 232.6 L578.2 238.5 L578.5 236.7 L578.8 238.2 L579.0 236.5 L579.2 238.1 L579.5 235.9 L579.8 238.7 L580.0 236.7 L580.2 238.4 L580.5 235.6 L580.8 238.8 L581.0 233.1 L581.2 238.3 L581.5 236.2 L581.8 238.1 L582.0 235.1 L582.2 238.9 L582.5 236.4 L582.8 238.2 L583.0 235.6 L583.2 238.1" stroke="#18c018"/>
</g>
<g stroke="#8a8a8a" opacity="0.45">
<line x1="113.5" y1="83" x2="113.5" y2="241"/><line x1="247.5" y1="83" x2="247.5" y2="241"/><line x1="381.5" y1="83" x2="381.5" y2="241"/><line x1="515.5" y1="83" x2="515.5" y2="241"/>
</g>
<line x1="314.5" y1="83" x2="314.5" y2="241" stroke="#444" stroke-dasharray="1 2"/>
<g font-size="12.3" text-anchor="end">
<text x="40" y="97.8" textLength="15.8" lengthAdjust="spacingAndGlyphs">-20</text>
<text x="40" y="126.4" textLength="15.8" lengthAdjust="spacingAndGlyphs">-40</text>
<text x="40" y="154.5" textLength="15.8" lengthAdjust="spacingAndGlyphs">-60</text>
<text x="40" y="182.7" textLength="15.8" lengthAdjust="spacingAndGlyphs">-80</text>
<text x="40" y="210.9" textLength="22.6" lengthAdjust="spacingAndGlyphs">-100</text>
<text x="40" y="239.2" textLength="22.6" lengthAdjust="spacingAndGlyphs">-120</text>
</g>
<g font-size="11" text-anchor="middle">
<text x="114.2" y="256.7">1.56</text>
<text x="248" y="256.7">1.57</text>
<text x="382" y="256.7">1.58</text>
<text x="516.3" y="256.7">1.59</text>
</g>
<text x="289" y="264.2" font-size="11" textLength="52.3" lengthAdjust="spacingAndGlyphs" style="fill:#333">频率 / GHz</text>
<text transform="translate(586.2 134.6) rotate(90)" font-size="11" textLength="53" lengthAdjust="spacingAndGlyphs" style="fill:#333">功率 / dBm</text>
<!-- up-down arrow -->
<g shape-rendering="geometricPrecision" fill="none" stroke="#1a1a1a" stroke-width="1.15">
<path d="M13.9 255V267M10.3 258.4L13.9 254.8L17.5 258.4M10.3 263.6L13.9 267.2L17.5 263.6"/>
</g>

<!-- ===== Spectrogram panel ===== -->
<rect x="1.5" y="275.5" width="600" height="217" fill="none" stroke="#2446cc" stroke-width="3"/><rect x="0.5" y="274.5" width="602" height="219" fill="none" stroke="#000c8c"/>
<rect x="96" y="277" width="444.5" height="16" fill="url(#cbar)"/>
<g stroke="#222" stroke-width="1"><line x1="192.5" y1="277" x2="192.5" y2="279"/><line x1="192.5" y1="291" x2="192.5" y2="293"/><line x1="274.5" y1="277" x2="274.5" y2="279"/><line x1="274.5" y1="291" x2="274.5" y2="293"/><line x1="354.5" y1="277" x2="354.5" y2="279"/><line x1="354.5" y1="291" x2="354.5" y2="293"/><line x1="435.5" y1="277" x2="435.5" y2="279"/><line x1="435.5" y1="291" x2="435.5" y2="293"/><line x1="515.5" y1="277" x2="515.5" y2="279"/><line x1="515.5" y1="291" x2="515.5" y2="293"/></g>
<g font-size="10" text-anchor="middle" style="fill:#222">
<text x="110" y="289" style="fill:#1a1a50">-120</text>
<text x="273.5" y="289">-80</text>
<text x="435" y="289">-40</text>
</g>
<text x="544" y="289.3" font-size="10.5" textLength="19" lengthAdjust="spacingAndGlyphs" style="fill:#333">dBm</text>
<rect x="569.5" y="277.5" width="27.5" height="15" fill="#e6e6e6" stroke="#7a7a7a"/>
<rect x="577.8" y="279.8" width="10.5" height="9.2" rx="2" fill="#e8e8e8" stroke="#2a2a2a" stroke-width="1.5" shape-rendering="geometricPrecision"/>
<text x="6.4" y="289.7" font-size="11.5" textLength="60" lengthAdjust="spacingAndGlyphs">Spectrogram</text>
<text x="73.2" y="289.3" font-size="10" class="b" style="fill:#e8141e;stroke:#e8141e;stroke-width:0.3" textLength="16.6" lengthAdjust="spacingAndGlyphs">+Pk</text>

<svg x="45" y="302" width="540" height="158"><rect x="0" y="0" width="1.2" height="158" fill="#0010f8"/><rect x="1" y="0" width="1.2" height="158" fill="#0010f8"/><rect x="2" y="0" width="1.2" height="158" fill="#0010f8"/><rect x="3" y="0" width="1.2" height="158" fill="#0010f8"/><rect x="4" y="0" width="1.2" height="158" fill="#0010f8"/><rect x="5" y="0" width="1.2" height="158" fill="#0010f8"/><rect x="6" y="0" width="1.2" height="158" fill="#0010f8"/><rect x="7" y="0" width="1.2" height="158" fill="#0010f8"/><rect x="8" y="0" width="1.2" height="158" fill="#0010f8"/><rect x="9" y="0" width="1.2" height="158" fill="#0010f8"/><rect x="10" y="0" width="1.2" height="158" fill="#0010f8"/><rect x="11" y="0" width="1.2" height="158" fill="#0010f8"/><rect x="12" y="0" width="1.2" height="158" fill="#0010f8"/><rect x="13" y="0" width="1.2" height="158" fill="#0010f8"/><rect x="14" y="0" width="1.2" height="158" fill="#0010f8"/><rect x="15" y="0" width="1.2" height="158" fill="#0010f8"/><rect x="16" y="0" width="1.2" height="158" fill="#0010f8"/><rect x="17" y="0" width="1.2" height="158" fill="#0010f8"/><rect x="18" y="0" width="1.2" height="158" fill="#0010f8"/><rect x="19" y="0" width="1.2" height="158" fill="#0010f8"/><rect x="20" y="0" width="1.2" height="158" fill="#0010f8"/><rect x="21" y="0" width="1.2" height="158" fill="#0010f8"/><rect x="22" y="0" width="1.2" height="158" fill="#0010f8"/><rect x="23" y="0" width="1.2" height="158" fill="#0010f8"/><rect x="24" y="0" width="1.2" height="158" fill="#0010f8"/><rect x="25" y="0" width="1.2" height="158" fill="#0010f8"/><rect x="26" y="0" width="1.2" height="158" fill="#0010f8"/><rect x="27" y="0" width="1.2" height="158" fill="#0010f8"/><rect x="28" y="0" width="1.2" height="158" fill="#0010f8"/><rect x="29" y="0" width="1.2" height="158" fill="#0010f8"/><rect x="30" y="0" width="1.2" height="158" fill="#0010f8"/><rect x="31" y="0" width="1.2" height="158" fill="#0010f8"/><rect x="32" y="0" width="1.2" height="158" fill="#0010f8"/><rect x="33" y="0" width="1.2" height="158" fill="#0010f8"/><rect x="34" y="0" width="1.2" height="158" fill="#0010f8"/><rect x="35" y="0" width="1.2" height="158" fill="#0010f8"/><rect x="36" y="0" width="1.2" height="158" fill="#0010f8"/><rect x="37" y="0" width="1.2" height="158" fill="#0010f8"/><rect x="38" y="0" width="1.2" height="158" fill="#0010f8"/><rect x="39" y="0" width="1.2" height="158" fill="#0010f8"/><rect x="40" y="0" width="1.2" height="158" fill="#0010f8"/><rect x="41" y="0" width="1.2" height="158" fill="#0010f8"/><rect x="42" y="0" width="1.2" height="158" fill="#0010f8"/><rect x="43" y="0" width="1.2" height="158" fill="#0010f8"/><rect x="44" y="0" width="1.2" height="158" fill="#0010f8"/><rect x="45" y="0" width="1.2" height="158" fill="#0010f8"/><rect x="46" y="0" width="1.2" height="158" fill="#0010f8"/><rect x="47" y="0" width="1.2" height="158" fill="#0010f8"/><rect x="48" y="0" width="1.2" height="158" fill="#0010f8"/><rect x="49" y="0" width="1.2" height="158" fill="#0010f8"/><rect x="50" y="0" width="1.2" height="158" fill="#0010f8"/><rect x="51" y="0" width="1.2" height="158" fill="#0010f8"/><rect x="52" y="0" width="1.2" height="158" fill="#0010f8"/><rect x="53" y="0" width="1.2" height="158" fill="#0010f8"/><rect x="54" y="0" width="1.2" height="158" fill="#0010f8"/><rect x="55" y="0" width="1.2" height="158" fill="#0010f8"/><rect x="56" y="0" width="1.2" height="158" fill="#0010f8"/><rect x="57" y="0" width="1.2" height="158" fill="#0010f8"/><rect x="58" y="0" width="1.2" height="158" fill="#0010f8"/><rect x="59" y="0" width="1.2" height="158" fill="#0010f8"/><rect x="60" y="0" width="1.2" height="158" fill="#0010f8"/><rect x="61" y="0" width="1.2" height="158" fill="#0010f8"/><rect x="62" y="0" width="1.2" height="158" fill="#0010f8"/><rect x="63" y="0" width="1.2" height="158" fill="#0010f8"/><rect x="64" y="0" width="1.2" height="158" fill="#0010f8"/><rect x="65" y="0" width="1.2" height="158" fill="#0010f8"/><rect x="66" y="0" width="1.2" height="158" fill="#0010f8"/><rect x="67" y="0" width="1.2" height="158" fill="#0010f8"/><rect x="68" y="0" width="1.2" height="158" fill="#0010f8"/><rect x="69" y="0" width="1.2" height="158" fill="#0010f8"/><rect x="70" y="0" width="1.2" height="158" fill="#0010f8"/><rect x="71" y="0" width="1.2" height="158" fill="#0010f8"/><rect x="72" y="0" width="1.2" height="158" fill="#0010f8"/><rect x="73" y="0" width="1.2" height="158" fill="#0010f8"/><rect x="74" y="0" width="1.2" height="158" fill="#0010f8"/><rect x="75" y="0" width="1.2" height="158" fill="#0010f8"/><rect x="76" y="0" width="1.2" height="158" fill="#0010f8"/><rect x="77" y="0" width="1.2" height="158" fill="#0010f8"/><rect x="78" y="0" width="1.2" height="158" fill="#0010f8"/><rect x="79" y="0" width="1.2" height="158" fill="#0010f8"/><rect x="80" y="0" width="1.2" height="158" fill="#0010f8"/><rect x="81" y="0" width="1.2" height="158" fill="#0010f8"/><rect x="82" y="0" width="1.2" height="158" fill="#0010f8"/><rect x="83" y="0" width="1.2" height="158" fill="#0010f8"/><rect x="84" y="0" width="1.2" height="158" fill="#0010f8"/><rect x="85" y="0" width="1.2" height="158" fill="#0010f8"/><rect x="86" y="0" width="1.2" height="158" fill="#0010f8"/><rect x="87" y="0" width="1.2" height="158" fill="#0010f8"/><rect x="88" y="0" width="1.2" height="158" fill="#0010f8"/><rect x="89" y="0" width="1.2" height="158" fill="#0010f8"/><rect x="90" y="0" width="1.2" height="158" fill="#0010f8"/><rect x="91" y="0" width="1.2" height="158" fill="#0010f8"/><rect x="92" y="0" width="1.2" height="158" fill="#0010f8"/><rect x="93" y="0" width="1.2" height="158" fill="#0010f8"/><rect x="94" y="0" width="1.2" height="158" fill="#0010f8"/><rect x="95" y="0" width="1.2" height="158" fill="#0010f8"/><rect x="96" y="0" width="1.2" height="158" fill="#0010f8"/><rect x="97" y="0" width="1.2" height="158" fill="#0010f8"/><rect x="98" y="0" width="1.2" height="158" fill="#0010f8"/><rect x="99" y="0" width="1.2" height="158" fill="#0010f8"/><rect x="100" y="0" width="1.2" height="158" fill="#0010f8"/><rect x="101" y="0" width="1.2" height="158" fill="#0010f8"/><rect x="102" y="0" width="1.2" height="158" fill="#0010f8"/><rect x="103" y="0" width="1.2" height="158" fill="#0010f8"/><rect x="104" y="0" width="1.2" height="158" fill="#0010f8"/><rect x="105" y="0" width="1.2" height="158" fill="#0011f8"/><rect x="106" y="0" width="1.2" height="158" fill="#0013f8"/><rect x="107" y="0" width="1.2" height="158" fill="#0015f8"/><rect x="108" y="0" width="1.2" height="158" fill="#0018f8"/><rect x="109" y="0" width="1.2" height="158" fill="#011af8"/><rect x="110" y="0" width="1.2" height="158" fill="#011cf8"/><rect x="111" y="0" width="1.2" height="158" fill="#0121f8"/><rect x="112" y="0" width="1.2" height="158" fill="#0228f5"/><rect x="113" y="0" width="1.2" height="158" fill="#032ff5"/><rect x="114" y="0" width="1.2" height="158" fill="#0436f5"/><rect x="115" y="0" width="1.2" height="158" fill="#043df5"/><rect x="116" y="0" width="1.2" height="158" fill="#0544f5"/><rect x="117" y="0" width="1.2" height="158" fill="#064cf5"/><rect x="118" y="0" width="1.2" height="158" fill="#0652f5"/><rect x="119" y="0" width="1.2" height="158" fill="#0755f5"/><rect x="120" y="0" width="1.2" height="158" fill="#0758f5"/><rect x="121" y="0" width="1.2" height="158" fill="#075af5"/><rect x="122" y="0" width="1.2" height="158" fill="#075cf5"/><rect x="123" y="0" width="1.2" height="158" fill="#085ff5"/><rect x="124" y="0" width="1.2" height="158" fill="#0862f5"/><rect x="125" y="0" width="1.2" height="158" fill="#0864f5"/><rect x="126" y="0" width="1.2" height="158" fill="#0965f5"/><rect x="127" y="0" width="1.2" height="158" fill="#0966f5"/><rect x="128" y="0" width="1.2" height="158" fill="#0966f5"/><rect x="129" y="0" width="1.2" height="158" fill="#0967f5"/><rect x="130" y="0" width="1.2" height="158" fill="#0969f5"/><rect x="131" y="0" width="1.2" height="158" fill="#0a6df5"/><rect x="132" y="0" width="1.2" height="158" fill="#0a73f5"/><rect x="133" y="0" width="1.2" height="158" fill="#0a78f5"/><rect x="134" y="0" width="1.2" height="158" fill="#0a7df5"/><rect x="135" y="0" width="1.2" height="158" fill="#0a7ff5"/><rect x="136" y="0" width="1.2" height="158" fill="#0b7ff5"/><rect x="137" y="0" width="1.2" height="158" fill="#0b7cf5"/><rect x="138" y="0" width="1.2" height="158" fill="#0b78f5"/><rect x="139" y="0" width="1.2" height="158" fill="#0b76f5"/><rect x="140" y="0" width="1.2" height="158" fill="#0b75f5"/><rect x="141" y="0" width="1.2" height="158" fill="#0b77f5"/><rect x="142" y="0" width="1.2" height="158" fill="#0b78f5"/><rect x="143" y="0" width="1.2" height="158" fill="#0b79f5"/><rect x="144" y="0" width="1.2" height="158" fill="#0b79f5"/><rect x="145" y="0" width="1.2" height="158" fill="#0b78f5"/><rect x="146" y="0" width="1.2" height="158" fill="#0b77f5"/><rect x="147" y="0" width="1.2" height="158" fill="#0a74f5"/><rect x="148" y="0" width="1.2" height="158" fill="#0a73f5"/><rect x="149" y="0" width="1.2" height="158" fill="#0a72f5"/><rect x="150" y="0" width="1.2" height="158" fill="#0971f5"/><rect x="151" y="0" width="1.2" height="158" fill="#0971f5"/><rect x="152" y="0" width="1.2" height="158" fill="#0971f5"/><rect x="153" y="0" width="1.2" height="158" fill="#0970f5"/><rect x="154" y="0" width="1.2" height="158" fill="#096ef5"/><rect x="155" y="0" width="1.2" height="158" fill="#096ef5"/><rect x="156" y="0" width="1.2" height="158" fill="#096ff5"/><rect x="157" y="0" width="1.2" height="158" fill="#0971f5"/><rect x="158" y="0" width="1.2" height="158" fill="#0974f5"/><rect x="159" y="0" width="1.2" height="158" fill="#0976f5"/><rect x="160" y="0" width="1.2" height="158" fill="#0a77f5"/><rect x="161" y="0" width="1.2" height="158" fill="#0a77f5"/><rect x="162" y="0" width="1.2" height="158" fill="#0a76f5"/><rect x="163" y="0" width="1.2" height="158" fill="#0a75f5"/><rect x="164" y="0" width="1.2" height="158" fill="#0a75f5"/><rect x="165" y="0" width="1.2" height="158" fill="#0a75f5"/><rect x="166" y="0" width="1.2" height="158" fill="#0a76f5"/><rect x="167" y="0" width="1.2" height="158" fill="#0a77f5"/><rect x="168" y="0" width="1.2" height="158" fill="#0a77f5"/><rect x="169" y="0" width="1.2" height="158" fill="#0a76f5"/><rect x="170" y="0" width="1.2" height="158" fill="#0975f5"/><rect x="171" y="0" width="1.2" height="158" fill="#0973f5"/><rect x="172" y="0" width="1.2" height="158" fill="#0972f5"/><rect x="173" y="0" width="1.2" height="158" fill="#0970f5"/><rect x="174" y="0" width="1.2" height="158" fill="#096ef5"/><rect x="175" y="0" width="1.2" height="158" fill="#096df5"/><rect x="176" y="0" width="1.2" height="158" fill="#096df5"/><rect x="177" y="0" width="1.2" height="158" fill="#096ef5"/><rect x="178" y="0" width="1.2" height="158" fill="#096ef5"/><rect x="179" y="0" width="1.2" height="158" fill="#096df5"/><rect x="180" y="0" width="1.2" height="158" fill="#096cf5"/><rect x="181" y="0" width="1.2" height="158" fill="#096bf5"/><rect x="182" y="0" width="1.2" height="158" fill="#096bf5"/><rect x="183" y="0" width="1.2" height="158" fill="#096cf5"/><rect x="184" y="0" width="1.2" height="158" fill="#096ef5"/><rect x="185" y="0" width="1.2" height="158" fill="#0970f5"/><rect x="186" y="0" width="1.2" height="158" fill="#0972f5"/><rect x="187" y="0" width="1.2" height="158" fill="#0973f5"/><rect x="188" y="0" width="1.2" height="158" fill="#0974f5"/><rect x="189" y="0" width="1.2" height="158" fill="#0975f5"/><rect x="190" y="0" width="1.2" height="158" fill="#0973f5"/><rect x="191" y="0" width="1.2" height="158" fill="#0971f5"/><rect x="192" y="0" width="1.2" height="158" fill="#096ff5"/><rect x="193" y="0" width="1.2" height="158" fill="#096ef5"/><rect x="194" y="0" width="1.2" height="158" fill="#096ff5"/><rect x="195" y="0" width="1.2" height="158" fill="#0972f5"/><rect x="196" y="0" width="1.2" height="158" fill="#0975f5"/><rect x="197" y="0" width="1.2" height="158" fill="#0978f5"/><rect x="198" y="0" width="1.2" height="158" fill="#097af5"/><rect x="199" y="0" width="1.2" height="158" fill="#097bf5"/><rect x="200" y="0" width="1.2" height="158" fill="#097cf5"/><rect x="201" y="0" width="1.2" height="158" fill="#097cf5"/><rect x="202" y="0" width="1.2" height="158" fill="#097bf5"/><rect x="203" y="0" width="1.2" height="158" fill="#0978f5"/><rect x="204" y="0" width="1.2" height="158" fill="#0975f5"/><rect x="205" y="0" width="1.2" height="158" fill="#0972f5"/><rect x="206" y="0" width="1.2" height="158" fill="#096ff5"/><rect x="207" y="0" width="1.2" height="158" fill="#0a6df5"/><rect x="208" y="0" width="1.2" height="158" fill="#0a6df5"/><rect x="209" y="0" width="1.2" height="158" fill="#0a6ef5"/><rect x="210" y="0" width="1.2" height="158" fill="#0a6ff5"/><rect x="211" y="0" width="1.2" height="158" fill="#0a72f5"/><rect x="212" y="0" width="1.2" height="158" fill="#0a75f5"/><rect x="213" y="0" width="1.2" height="158" fill="#0a78f5"/><rect x="214" y="0" width="1.2" height="158" fill="#0a7af5"/><rect x="215" y="0" width="1.2" height="158" fill="#0a7bf5"/><rect x="216" y="0" width="1.2" height="158" fill="#0a7bf5"/><rect x="217" y="0" width="1.2" height="158" fill="#0a7bf5"/><rect x="218" y="0" width="1.2" height="158" fill="#0a7bf5"/><rect x="219" y="0" width="1.2" height="158" fill="#0a7bf5"/><rect x="220" y="0" width="1.2" height="158" fill="#0a7af5"/><rect x="221" y="0" width="1.2" height="158" fill="#0a79f5"/><rect x="222" y="0" width="1.2" height="158" fill="#0a78f5"/><rect x="223" y="0" width="1.2" height="158" fill="#0a78f5"/><rect x="224" y="0" width="1.2" height="158" fill="#0a78f5"/><rect x="225" y="0" width="1.2" height="158" fill="#0a7af5"/><rect x="226" y="0" width="1.2" height="158" fill="#0a7cf5"/><rect x="227" y="0" width="1.2" height="158" fill="#0a7ef5"/><rect x="228" y="0" width="1.2" height="158" fill="#0a7ff5"/><rect x="229" y="0" width="1.2" height="158" fill="#0b7ef5"/><rect x="230" y="0" width="1.2" height="158" fill="#0b7df5"/><rect x="231" y="0" width="1.2" height="158" fill="#0b7bf5"/><rect x="232" y="0" width="1.2" height="158" fill="#0b7af5"/><rect x="233" y="0" width="1.2" height="158" fill="#0b79f5"/><rect x="234" y="0" width="1.2" height="158" fill="#0b7af5"/><rect x="235" y="0" width="1.2" height="158" fill="#0b7cf5"/><rect x="236" y="0" width="1.2" height="158" fill="#0b7ef5"/><rect x="237" y="0" width="1.2" height="158" fill="#0b81f5"/><rect x="238" y="0" width="1.2" height="158" fill="#0b83f5"/><rect x="239" y="0" width="1.2" height="158" fill="#0b85f5"/><rect x="240" y="0" width="1.2" height="158" fill="#0b86f5"/><rect x="241" y="0" width="1.2" height="158" fill="#0b86f5"/><rect x="242" y="0" width="1.2" height="158" fill="#0b86f5"/><rect x="243" y="0" width="1.2" height="158" fill="#0b85f5"/><rect x="244" y="0" width="1.2" height="158" fill="#0b85f5"/><rect x="245" y="0" width="1.2" height="158" fill="#0b83f5"/><rect x="246" y="0" width="1.2" height="158" fill="#0b80f5"/><rect x="247" y="0" width="1.2" height="158" fill="#0b7cf5"/><rect x="248" y="0" width="1.2" height="158" fill="#0b7af5"/><rect x="249" y="0" width="1.2" height="158" fill="#0b79f5"/><rect x="250" y="0" width="1.2" height="158" fill="#0b7bf5"/><rect x="251" y="0" width="1.2" height="158" fill="#0b7ef5"/><rect x="252" y="0" width="1.2" height="158" fill="#0b81f5"/><rect x="253" y="0" width="1.2" height="158" fill="#0b83f5"/><rect x="254" y="0" width="1.2" height="158" fill="#0b83f5"/><rect x="255" y="0" width="1.2" height="158" fill="#0b82f5"/><rect x="256" y="0" width="1.2" height="158" fill="#0b81f5"/><rect x="257" y="0" width="1.2" height="158" fill="#0b80f5"/><rect x="258" y="0" width="1.2" height="158" fill="#0b80f5"/><rect x="259" y="0" width="1.2" height="158" fill="#0b7ff5"/><rect x="260" y="0" width="1.2" height="158" fill="#0b7ff5"/><rect x="261" y="0" width="1.2" height="158" fill="#0b80f5"/><rect x="262" y="0" width="1.2" height="158" fill="#0b82f5"/><rect x="263" y="0" width="1.2" height="158" fill="#0b84f5"/><rect x="264" y="0" width="1.2" height="158" fill="#0b85f5"/><rect x="265" y="0" width="1.2" height="158" fill="#0b84f5"/><rect x="266" y="0" width="1.2" height="158" fill="#0b83f5"/><rect x="267" y="0" width="1.2" height="158" fill="#0b80f5"/><rect x="268" y="0" width="1.2" height="158" fill="#0b7ef5"/><rect x="269" y="0" width="1.2" height="158" fill="#0b7bf5"/><rect x="270" y="0" width="1.2" height="158" fill="#0b7af5"/><rect x="271" y="0" width="1.2" height="158" fill="#0b7af5"/><rect x="272" y="0" width="1.2" height="158" fill="#0b7bf5"/><rect x="273" y="0" width="1.2" height="158" fill="#0b7df5"/><rect x="274" y="0" width="1.2" height="158" fill="#0b80f5"/><rect x="275" y="0" width="1.2" height="158" fill="#0b83f5"/><rect x="276" y="0" width="1.2" height="158" fill="#0b84f5"/><rect x="277" y="0" width="1.2" height="158" fill="#0b83f5"/><rect x="278" y="0" width="1.2" height="158" fill="#0b80f5"/><rect x="279" y="0" width="1.2" height="158" fill="#0b7df5"/><rect x="280" y="0" width="1.2" height="158" fill="#0b7cf5"/><rect x="281" y="0" width="1.2" height="158" fill="#0b7df5"/><rect x="282" y="0" width="1.2" height="158" fill="#0b7ff5"/><rect x="283" y="0" width="1.2" height="158" fill="#0b81f5"/><rect x="284" y="0" width="1.2" height="158" fill="#0b82f5"/><rect x="285" y="0" width="1.2" height="158" fill="#0b81f5"/><rect x="286" y="0" width="1.2" height="158" fill="#0b7ef5"/><rect x="287" y="0" width="1.2" height="158" fill="#0b7bf5"/><rect x="288" y="0" width="1.2" height="158" fill="#0a77f5"/><rect x="289" y="0" width="1.2" height="158" fill="#0a73f5"/><rect x="290" y="0" width="1.2" height="158" fill="#0a6ff5"/><rect x="291" y="0" width="1.2" height="158" fill="#0a6cf5"/><rect x="292" y="0" width="1.2" height="158" fill="#096af5"/><rect x="293" y="0" width="1.2" height="158" fill="#0968f5"/><rect x="294" y="0" width="1.2" height="158" fill="#0965f5"/><rect x="295" y="0" width="1.2" height="158" fill="#0963f5"/><rect x="296" y="0" width="1.2" height="158" fill="#0862f5"/><rect x="297" y="0" width="1.2" height="158" fill="#0862f5"/><rect x="298" y="0" width="1.2" height="158" fill="#0860f5"/><rect x="299" y="0" width="1.2" height="158" fill="#075cf5"/><rect x="300" y="0" width="1.2" height="158" fill="#0757f5"/><rect x="301" y="0" width="1.2" height="158" fill="#0751f5"/><rect x="302" y="0" width="1.2" height="158" fill="#074ff5"/><rect x="303" y="0" width="1.2" height="158" fill="#0751f5"/><rect x="304" y="0" width="1.2" height="158" fill="#0754f5"/><rect x="305" y="0" width="1.2" height="158" fill="#0758f5"/><rect x="306" y="0" width="1.2" height="158" fill="#075cf5"/><rect x="307" y="0" width="1.2" height="158" fill="#085ef5"/><rect x="308" y="0" width="1.2" height="158" fill="#0860f5"/><rect x="309" y="0" width="1.2" height="158" fill="#0860f5"/><rect x="310" y="0" width="1.2" height="158" fill="#085ff5"/><rect x="311" y="0" width="1.2" height="158" fill="#0860f5"/><rect x="312" y="0" width="1.2" height="158" fill="#0964f5"/><rect x="313" y="0" width="1.2" height="158" fill="#096af5"/><rect x="314" y="0" width="1.2" height="158" fill="#0a70f5"/><rect x="315" y="0" width="1.2" height="158" fill="#0a76f5"/><rect x="316" y="0" width="1.2" height="158" fill="#0b7bf5"/><rect x="317" y="0" width="1.2" height="158" fill="#0b7df5"/><rect x="318" y="0" width="1.2" height="158" fill="#0b7df5"/><rect x="319" y="0" width="1.2" height="158" fill="#0b7df5"/><rect x="320" y="0" width="1.2" height="158" fill="#0b7ef5"/><rect x="321" y="0" width="1.2" height="158" fill="#0b7ff5"/><rect x="322" y="0" width="1.2" height="158" fill="#0b81f5"/><rect x="323" y="0" width="1.2" height="158" fill="#0b82f5"/><rect x="324" y="0" width="1.2" height="158" fill="#0b83f5"/><rect x="325" y="0" width="1.2" height="158" fill="#0b83f5"/><rect x="326" y="0" width="1.2" height="158" fill="#0b83f5"/><rect x="327" y="0" width="1.2" height="158" fill="#0b82f5"/><rect x="328" y="0" width="1.2" height="158" fill="#0b81f5"/><rect x="329" y="0" width="1.2" height="158" fill="#0b81f5"/><rect x="330" y="0" width="1.2" height="158" fill="#0b80f5"/><rect x="331" y="0" width="1.2" height="158" fill="#0b80f5"/><rect x="332" y="0" width="1.2" height="158" fill="#0b7ff5"/><rect x="333" y="0" width="1.2" height="158" fill="#0b7df5"/><rect x="334" y="0" width="1.2" height="158" fill="#0b7bf5"/><rect x="335" y="0" width="1.2" height="158" fill="#0b7af5"/><rect x="336" y="0" width="1.2" height="158" fill="#0b79f5"/><rect x="337" y="0" width="1.2" height="158" fill="#0b78f5"/><rect x="338" y="0" width="1.2" height="158" fill="#0b78f5"/><rect x="339" y="0" width="1.2" height="158" fill="#0b78f5"/><rect x="340" y="0" width="1.2" height="158" fill="#0b78f5"/><rect x="341" y="0" width="1.2" height="158" fill="#0b79f5"/><rect x="342" y="0" width="1.2" height="158" fill="#0b7af5"/><rect x="343" y="0" width="1.2" height="158" fill="#0b7af5"/><rect x="344" y="0" width="1.2" height="158" fill="#0b79f5"/><rect x="345" y="0" width="1.2" height="158" fill="#0b77f5"/><rect x="346" y="0" width="1.2" height="158" fill="#0b76f5"/><rect x="347" y="0" width="1.2" height="158" fill="#0b77f5"/><rect x="348" y="0" width="1.2" height="158" fill="#0b7af5"/><rect x="349" y="0" width="1.2" height="158" fill="#0b7ff5"/><rect x="350" y="0" width="1.2" height="158" fill="#0b83f5"/><rect x="351" y="0" width="1.2" height="158" fill="#0b85f5"/><rect x="352" y="0" width="1.2" height="158" fill="#0b85f5"/><rect x="353" y="0" width="1.2" height="158" fill="#0b84f5"/><rect x="354" y="0" width="1.2" height="158" fill="#0b83f5"/><rect x="355" y="0" width="1.2" height="158" fill="#0b83f5"/><rect x="356" y="0" width="1.2" height="158" fill="#0b84f5"/><rect x="357" y="0" width="1.2" height="158" fill="#0b86f5"/><rect x="358" y="0" width="1.2" height="158" fill="#0b87f5"/><rect x="359" y="0" width="1.2" height="158" fill="#0b88f5"/><rect x="360" y="0" width="1.2" height="158" fill="#0c89f5"/><rect x="361" y="0" width="1.2" height="158" fill="#0c88f5"/><rect x="362" y="0" width="1.2" height="158" fill="#0c86f5"/><rect x="363" y="0" width="1.2" height="158" fill="#0c84f5"/><rect x="364" y="0" width="1.2" height="158" fill="#0c82f5"/><rect x="365" y="0" width="1.2" height="158" fill="#0c82f5"/><rect x="366" y="0" width="1.2" height="158" fill="#0c84f5"/><rect x="367" y="0" width="1.2" height="158" fill="#0c87f5"/><rect x="368" y="0" width="1.2" height="158" fill="#0c89f5"/><rect x="369" y="0" width="1.2" height="158" fill="#0c89f5"/><rect x="370" y="0" width="1.2" height="158" fill="#0c89f5"/><rect x="371" y="0" width="1.2" height="158" fill="#0c87f5"/><rect x="372" y="0" width="1.2" height="158" fill="#0c86f5"/><rect x="373" y="0" width="1.2" height="158" fill="#0c85f5"/><rect x="374" y="0" width="1.2" height="158" fill="#0c84f5"/><rect x="375" y="0" width="1.2" height="158" fill="#0c83f5"/><rect x="376" y="0" width="1.2" height="158" fill="#0c81f5"/><rect x="377" y="0" width="1.2" height="158" fill="#0c7ff5"/><rect x="378" y="0" width="1.2" height="158" fill="#0c7df5"/><rect x="379" y="0" width="1.2" height="158" fill="#0c7df5"/><rect x="380" y="0" width="1.2" height="158" fill="#0c7ef5"/><rect x="381" y="0" width="1.2" height="158" fill="#0c81f5"/><rect x="382" y="0" width="1.2" height="158" fill="#0c85f5"/><rect x="383" y="0" width="1.2" height="158" fill="#0c87f5"/><rect x="384" y="0" width="1.2" height="158" fill="#0c88f5"/><rect x="385" y="0" width="1.2" height="158" fill="#0b88f5"/><rect x="386" y="0" width="1.2" height="158" fill="#0b86f5"/><rect x="387" y="0" width="1.2" height="158" fill="#0b83f5"/><rect x="388" y="0" width="1.2" height="158" fill="#0b81f5"/><rect x="389" y="0" width="1.2" height="158" fill="#0b80f5"/><rect x="390" y="0" width="1.2" height="158" fill="#0b7ff5"/><rect x="391" y="0" width="1.2" height="158" fill="#0b80f5"/><rect x="392" y="0" width="1.2" height="158" fill="#0b82f5"/><rect x="393" y="0" width="1.2" height="158" fill="#0b85f5"/><rect x="394" y="0" width="1.2" height="158" fill="#0b88f5"/><rect x="395" y="0" width="1.2" height="158" fill="#0b89f5"/><rect x="396" y="0" width="1.2" height="158" fill="#0b88f5"/><rect x="397" y="0" width="1.2" height="158" fill="#0b86f5"/><rect x="398" y="0" width="1.2" height="158" fill="#0b83f5"/><rect x="399" y="0" width="1.2" height="158" fill="#0b81f5"/><rect x="400" y="0" width="1.2" height="158" fill="#0b80f5"/><rect x="401" y="0" width="1.2" height="158" fill="#0b80f5"/><rect x="402" y="0" width="1.2" height="158" fill="#0b80f5"/><rect x="403" y="0" width="1.2" height="158" fill="#0b81f5"/><rect x="404" y="0" width="1.2" height="158" fill="#0b81f5"/><rect x="405" y="0" width="1.2" height="158" fill="#0b80f5"/><rect x="406" y="0" width="1.2" height="158" fill="#0b80f5"/><rect x="407" y="0" width="1.2" height="158" fill="#0b7ff5"/><rect x="408" y="0" width="1.2" height="158" fill="#0b7ef5"/><rect x="409" y="0" width="1.2" height="158" fill="#0b7df5"/><rect x="410" y="0" width="1.2" height="158" fill="#0b7cf5"/><rect x="411" y="0" width="1.2" height="158" fill="#0b79f5"/><rect x="412" y="0" width="1.2" height="158" fill="#0b77f5"/><rect x="413" y="0" width="1.2" height="158" fill="#0b76f5"/><rect x="414" y="0" width="1.2" height="158" fill="#0a75f5"/><rect x="415" y="0" width="1.2" height="158" fill="#0a76f5"/><rect x="416" y="0" width="1.2" height="158" fill="#0a77f5"/><rect x="417" y="0" width="1.2" height="158" fill="#0a77f5"/><rect x="418" y="0" width="1.2" height="158" fill="#0a77f5"/><rect x="419" y="0" width="1.2" height="158" fill="#0a77f5"/><rect x="420" y="0" width="1.2" height="158" fill="#0a78f5"/><rect x="421" y="0" width="1.2" height="158" fill="#0a78f5"/><rect x="422" y="0" width="1.2" height="158" fill="#0a77f5"/><rect x="423" y="0" width="1.2" height="158" fill="#0a75f5"/><rect x="424" y="0" width="1.2" height="158" fill="#0a72f5"/><rect x="425" y="0" width="1.2" height="158" fill="#0a6ff5"/><rect x="426" y="0" width="1.2" height="158" fill="#0a6df5"/><rect x="427" y="0" width="1.2" height="158" fill="#0a6df5"/><rect x="428" y="0" width="1.2" height="158" fill="#0a6df5"/><rect x="429" y="0" width="1.2" height="158" fill="#0a6ef5"/><rect x="430" y="0" width="1.2" height="158" fill="#096ff5"/><rect x="431" y="0" width="1.2" height="158" fill="#096ef5"/><rect x="432" y="0" width="1.2" height="158" fill="#096cf5"/><rect x="433" y="0" width="1.2" height="158" fill="#096af5"/><rect x="434" y="0" width="1.2" height="158" fill="#0969f5"/><rect x="435" y="0" width="1.2" height="158" fill="#096af5"/><rect x="436" y="0" width="1.2" height="158" fill="#096bf5"/><rect x="437" y="0" width="1.2" height="158" fill="#096bf5"/><rect x="438" y="0" width="1.2" height="158" fill="#096bf5"/><rect x="439" y="0" width="1.2" height="158" fill="#0969f5"/><rect x="440" y="0" width="1.2" height="158" fill="#0968f5"/><rect x="441" y="0" width="1.2" height="158" fill="#0968f5"/><rect x="442" y="0" width="1.2" height="158" fill="#0968f5"/><rect x="443" y="0" width="1.2" height="158" fill="#0968f5"/><rect x="444" y="0" width="1.2" height="158" fill="#0968f5"/><rect x="445" y="0" width="1.2" height="158" fill="#0868f5"/><rect x="446" y="0" width="1.2" height="158" fill="#0868f5"/><rect x="447" y="0" width="1.2" height="158" fill="#0867f5"/><rect x="448" y="0" width="1.2" height="158" fill="#0866f5"/><rect x="449" y="0" width="1.2" height="158" fill="#0866f5"/><rect x="450" y="0" width="1.2" height="158" fill="#0865f5"/><rect x="451" y="0" width="1.2" height="158" fill="#0866f5"/><rect x="452" y="0" width="1.2" height="158" fill="#0967f5"/><rect x="453" y="0" width="1.2" height="158" fill="#0968f5"/><rect x="454" y="0" width="1.2" height="158" fill="#096af5"/><rect x="455" y="0" width="1.2" height="158" fill="#096cf5"/><rect x="456" y="0" width="1.2" height="158" fill="#096ff5"/><rect x="457" y="0" width="1.2" height="158" fill="#0a71f5"/><rect x="458" y="0" width="1.2" height="158" fill="#0a73f5"/><rect x="459" y="0" width="1.2" height="158" fill="#0a76f5"/><rect x="460" y="0" width="1.2" height="158" fill="#0a77f5"/><rect x="461" y="0" width="1.2" height="158" fill="#0a77f5"/><rect x="462" y="0" width="1.2" height="158" fill="#0a77f5"/><rect x="463" y="0" width="1.2" height="158" fill="#0a77f5"/><rect x="464" y="0" width="1.2" height="158" fill="#0a76f5"/><rect x="465" y="0" width="1.2" height="158" fill="#0b76f5"/><rect x="466" y="0" width="1.2" height="158" fill="#0b78f5"/><rect x="467" y="0" width="1.2" height="158" fill="#0b7af5"/><rect x="468" y="0" width="1.2" height="158" fill="#0b7bf5"/><rect x="469" y="0" width="1.2" height="158" fill="#0a7af5"/><rect x="470" y="0" width="1.2" height="158" fill="#0a76f5"/><rect x="471" y="0" width="1.2" height="158" fill="#0a72f5"/><rect x="472" y="0" width="1.2" height="158" fill="#0a6df5"/><rect x="473" y="0" width="1.2" height="158" fill="#0967f5"/><rect x="474" y="0" width="1.2" height="158" fill="#0962f5"/><rect x="475" y="0" width="1.2" height="158" fill="#085ef5"/><rect x="476" y="0" width="1.2" height="158" fill="#085af5"/><rect x="477" y="0" width="1.2" height="158" fill="#0754f5"/><rect x="478" y="0" width="1.2" height="158" fill="#064ff5"/><rect x="479" y="0" width="1.2" height="158" fill="#064af5"/><rect x="480" y="0" width="1.2" height="158" fill="#0546f5"/><rect x="481" y="0" width="1.2" height="158" fill="#0543f5"/><rect x="482" y="0" width="1.2" height="158" fill="#0440f5"/><rect x="483" y="0" width="1.2" height="158" fill="#043bf5"/><rect x="484" y="0" width="1.2" height="158" fill="#0336f5"/><rect x="485" y="0" width="1.2" height="158" fill="#0331f5"/><rect x="486" y="0" width="1.2" height="158" fill="#022bf5"/><rect x="487" y="0" width="1.2" height="158" fill="#0226f8"/><rect x="488" y="0" width="1.2" height="158" fill="#0122f8"/><rect x="489" y="0" width="1.2" height="158" fill="#011ff8"/><rect x="490" y="0" width="1.2" height="158" fill="#011df8"/><rect x="491" y="0" width="1.2" height="158" fill="#011bf8"/><rect x="492" y="0" width="1.2" height="158" fill="#0018f8"/><rect x="493" y="0" width="1.2" height="158" fill="#0016f8"/><rect x="494" y="0" width="1.2" height="158" fill="#0013f8"/><rect x="495" y="0" width="1.2" height="158" fill="#0012f8"/><rect x="496" y="0" width="1.2" height="158" fill="#0011f8"/><rect x="497" y="0" width="1.2" height="158" fill="#0011f8"/><rect x="498" y="0" width="1.2" height="158" fill="#0011f8"/><rect x="499" y="0" width="1.2" height="158" fill="#0011f8"/><rect x="500" y="0" width="1.2" height="158" fill="#0011f8"/><rect x="501" y="0" width="1.2" height="158" fill="#0011f8"/><rect x="502" y="0" width="1.2" height="158" fill="#0011f8"/><rect x="503" y="0" width="1.2" height="158" fill="#0011f8"/><rect x="504" y="0" width="1.2" height="158" fill="#0011f8"/><rect x="505" y="0" width="1.2" height="158" fill="#0011f8"/><rect x="506" y="0" width="1.2" height="158" fill="#0011f8"/><rect x="507" y="0" width="1.2" height="158" fill="#0011f8"/><rect x="508" y="0" width="1.2" height="158" fill="#0011f8"/><rect x="509" y="0" width="1.2" height="158" fill="#0011f8"/><rect x="510" y="0" width="1.2" height="158" fill="#0011f8"/><rect x="511" y="0" width="1.2" height="158" fill="#0011f8"/><rect x="512" y="0" width="1.2" height="158" fill="#0011f8"/><rect x="513" y="0" width="1.2" height="158" fill="#0011f8"/><rect x="514" y="0" width="1.2" height="158" fill="#0011f8"/><rect x="515" y="0" width="1.2" height="158" fill="#0011f8"/><rect x="516" y="0" width="1.2" height="158" fill="#0011f8"/><rect x="517" y="0" width="1.2" height="158" fill="#0010f8"/><rect x="518" y="0" width="1.2" height="158" fill="#0010f8"/><rect x="519" y="0" width="1.2" height="158" fill="#0010f8"/><rect x="520" y="0" width="1.2" height="158" fill="#0010f8"/><rect x="521" y="0" width="1.2" height="158" fill="#0010f8"/><rect x="522" y="0" width="1.2" height="158" fill="#0010f8"/><rect x="523" y="0" width="1.2" height="158" fill="#0010f8"/><rect x="524" y="0" width="1.2" height="158" fill="#0010f8"/><rect x="525" y="0" width="1.2" height="158" fill="#0010f8"/><rect x="526" y="0" width="1.2" height="158" fill="#0010f8"/><rect x="527" y="0" width="1.2" height="158" fill="#0010f8"/><rect x="528" y="0" width="1.2" height="158" fill="#0010f8"/><rect x="529" y="0" width="1.2" height="158" fill="#0010f8"/><rect x="530" y="0" width="1.2" height="158" fill="#0010f8"/><rect x="531" y="0" width="1.2" height="158" fill="#0010f8"/><rect x="532" y="0" width="1.2" height="158" fill="#0010f8"/><rect x="533" y="0" width="1.2" height="158" fill="#0010f8"/><rect x="534" y="0" width="1.2" height="158" fill="#0010f8"/><rect x="535" y="0" width="1.2" height="158" fill="#0010f8"/><rect x="536" y="0" width="1.2" height="158" fill="#0010f8"/><rect x="537" y="0" width="1.2" height="158" fill="#0010f8"/><rect x="538" y="0" width="1.2" height="158" fill="#0010f8"/><rect x="539" y="0" width="1.2" height="158" fill="#0010f8"/></svg>
<rect x="45.5" y="302.5" width="538" height="157" fill="none" stroke="#d8d8e8"/><rect x="46.5" y="303.5" width="536" height="155" fill="none" stroke="#b8b8ff"/><rect x="44.5" y="301.5" width="540" height="159" fill="none" stroke="#808080"/>
<g stroke="#5a5a5a"><line x1="41" y1="302.5" x2="45" y2="302.5"/><line x1="41" y1="337.5" x2="45" y2="337.5"/><line x1="41" y1="371.5" x2="45" y2="371.5"/><line x1="41" y1="405.5" x2="45" y2="405.5"/><line x1="41" y1="438.5" x2="45" y2="438.5"/><line x1="113.5" y1="460" x2="113.5" y2="463"/><line x1="247.5" y1="460" x2="247.5" y2="463"/><line x1="381.5" y1="460" x2="381.5" y2="463"/><line x1="515.5" y1="460" x2="515.5" y2="463"/></g>
<g font-size="11" text-anchor="end">
<text x="40" y="308.6">0</text>
<text x="40" y="342.5">-0.5</text>
<text x="40" y="376.4">-1</text>
<text x="40" y="409.4">-1.5</text>
<text x="40" y="443.3">-2</text>
</g>
<g font-size="11" text-anchor="middle">
<text x="114.2" y="475.7">1.56</text>
<text x="248" y="475.7">1.57</text>
<text x="382" y="475.7">1.58</text>
<text x="516.3" y="475.7">1.59</text>
</g>
<text x="289" y="483.3" font-size="11" textLength="52.3" lengthAdjust="spacingAndGlyphs" style="fill:#333">频率 / GHz</text>
<text transform="translate(587.4 361.5) rotate(90)" font-size="11" textLength="39.5" lengthAdjust="spacingAndGlyphs" style="fill:#333">Time / s</text>

<!-- splitter handle -->
<rect x="284" y="271" width="34" height="7.5" fill="#111"/>
<rect x="284" y="273.5" width="34" height="2" fill="#fff" shape-rendering="geometricPrecision"/>

<!-- ===== bottom table ===== -->
<rect x="0" y="494" width="604" height="25" fill="#fff"/>
<g stroke="#b4b4b4">
<line x1="0.5" y1="494" x2="0.5" y2="519"/>
<line x1="174.5" y1="494" x2="174.5" y2="519"/>
<line x1="300.5" y1="494" x2="300.5" y2="519"/>
<line x1="401.5" y1="494" x2="401.5" y2="519"/>
<line x1="502.5" y1="494" x2="502.5" y2="519"/>
<line x1="602.5" y1="494" x2="602.5" y2="519"/>
</g>
<g font-size="9">
<text x="3" y="503.6" class="b" style="fill:#111" textLength="46.5" lengthAdjust="spacingAndGlyphs">RL|Att.|0f</text>
<text x="96.6" y="503.6" style="fill:#444" textLength="75" lengthAdjust="spacingAndGlyphs">-14 dBm|0 dB|关闭</text>
<text x="176.6" y="503.6" class="b" style="fill:#111" textLength="36.8" lengthAdjust="spacingAndGlyphs">中心频率</text>
<text x="259.1" y="503.6" style="fill:#444" textLength="38.3" lengthAdjust="spacingAndGlyphs">1.575 GHz</text>
<text x="303" y="503.6" class="b" style="fill:#111" textLength="19.8" lengthAdjust="spacingAndGlyphs">RBW</text>
<text x="365.7" y="503.6" style="fill:#444" textLength="32.8" lengthAdjust="spacingAndGlyphs">6.25 kHz</text>
<text x="403.7" y="503.6" class="b" style="fill:#111" textLength="36.8" lengthAdjust="spacingAndGlyphs">测量时间</text>
<text x="476.7" y="503.6" style="fill:#444" textLength="23" lengthAdjust="spacingAndGlyphs">10 ms</text>
<text x="505.3" y="503.6" class="b" style="fill:#111" textLength="36.8" lengthAdjust="spacingAndGlyphs">扫描计数</text>
<text x="573.5" y="503.6" style="fill:#444" textLength="26.8" lengthAdjust="spacingAndGlyphs">13 396</text>
<text x="3" y="515" class="b" style="fill:#111" textLength="41.7" lengthAdjust="spacingAndGlyphs">输入 / 预放</text>
<text x="140.5" y="515" style="fill:#444" textLength="31.2" lengthAdjust="spacingAndGlyphs">1 / 关闭</text>
<text x="176.6" y="515" class="b" style="fill:#111" textLength="18.2" lengthAdjust="spacingAndGlyphs">跨宽</text>
<text x="269.5" y="515" style="fill:#444" textLength="28" lengthAdjust="spacingAndGlyphs">40 MHz</text>
<text x="303" y="515" class="b" style="fill:#111" textLength="45.5" lengthAdjust="spacingAndGlyphs">三维频谱轴</text>
<text x="384.7" y="515" style="fill:#444" textLength="13.9" lengthAdjust="spacingAndGlyphs">570</text>
<text x="505.3" y="515" class="b" style="fill:#111" textLength="36.8" lengthAdjust="spacingAndGlyphs">扫描次数</text>
<text x="590.2" y="515" style="fill:#444" textLength="10" lengthAdjust="spacingAndGlyphs">50</text>
</g>
</svg>
</body></html>
